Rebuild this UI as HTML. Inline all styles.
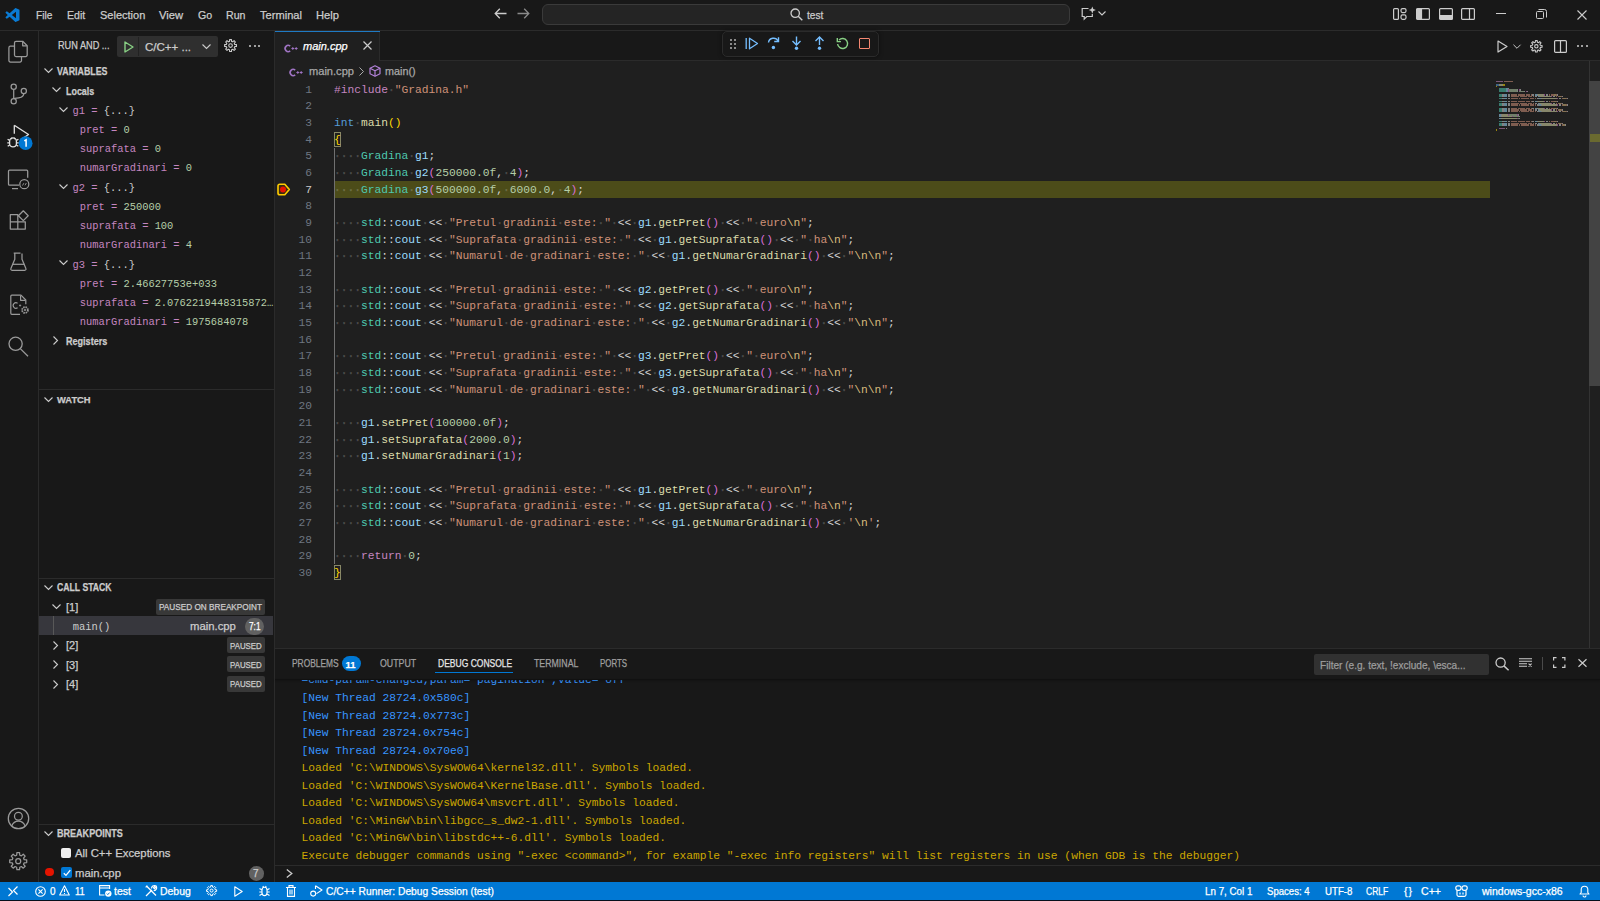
<!DOCTYPE html>
<html><head><meta charset="utf-8">
<style>
*{margin:0;padding:0;box-sizing:border-box}
html,body{-webkit-font-smoothing:antialiased;width:1600px;height:901px;overflow:hidden;background:#181818;font-family:"Liberation Sans",sans-serif;color:#cccccc}
.a{position:absolute}
body div{-webkit-text-stroke:0.25px currentColor}
.ln,.cl,.mo{-webkit-text-stroke:0}
svg{position:absolute;overflow:visible}
#title{left:0;top:0;width:1600px;height:31px;background:#181818;border-bottom:1px solid #2b2b2b}
#act{left:0;top:31px;width:39px;height:851px;background:#181818;border-right:1px solid #2b2b2b}
#side{left:39px;top:31px;width:236px;height:851px;background:#181818;border-right:1px solid #2b2b2b}
#editor{left:275px;top:31px;width:1325px;height:617px;background:#1f1f1f}
#tabs{left:275px;top:31px;width:1325px;height:30px;background:#181818;border-bottom:1px solid #2b2b2b}
#panel{left:275px;top:648px;width:1325px;height:234px;background:#181818;border-top:1px solid #2b2b2b}
#status{left:0;top:882px;width:1600px;height:19px;background:#0078d4;border-bottom:1.2px solid #06101c}
.mono{font-family:"Liberation Mono",monospace}
.menu{top:0;height:30px;line-height:30px;font-size:11.4px;color:#cccccc}
.ln{position:absolute;left:280px;width:32px;text-align:right;font-family:"Liberation Mono",monospace;font-size:11.25px;line-height:16.67px;height:16.67px;color:#6e7681;padding-top:0.5px}
.ln.act{color:#cccccc}
.cl{position:absolute;left:334px;font-family:"Liberation Mono",monospace;font-size:11.25px;line-height:16.67px;height:16.67px;white-space:pre;color:#d4d4d4;padding-top:0.5px}
.w{color:rgba(227,228,226,0.16);-webkit-text-stroke:0.6px rgba(227,228,226,0.16)}
</style></head><body>
<div id="title" class="a"></div>
<!-- logo -->
<svg style="left:5px;top:8px" width="15" height="14" viewBox="0 0 100 100"><path fill="#0a7bd4" d="M96.5 10.8 75.9.9a6.2 6.2 0 0 0-7.1 1.2L29.4 38 12.2 25a4.2 4.2 0 0 0-5.3.2L1.4 30.2a4.2 4.2 0 0 0 0 6.2L16.3 50 1.4 63.6a4.2 4.2 0 0 0 0 6.2l5.5 5a4.2 4.2 0 0 0 5.3.2l17.2-13 39.4 35.9a6.2 6.2 0 0 0 7.1 1.2l20.6-9.9a6.2 6.2 0 0 0 3.5-5.6V16.4a6.2 6.2 0 0 0-3.5-5.6ZM75 72.7 45.1 50 75 27.3Z"/></svg>
<!-- nav arrows -->
<svg style="left:494px;top:8px" width="13" height="11" viewBox="0 0 13 11"><path d="M12.5 5.5H1.2M5.8 0.8 1.2 5.5l4.6 4.7" fill="none" stroke="#cccccc" stroke-width="1.3"/></svg>
<svg style="left:517px;top:8px" width="13" height="11" viewBox="0 0 13 11"><path d="M0.5 5.5h11.3M7.2 0.8l4.6 4.7-4.6 4.7" fill="none" stroke="#8a8a8a" stroke-width="1.3"/></svg>
<!-- command center -->
<div class="a" style="left:542px;top:4px;width:528px;height:21px;background:#242424;border:1px solid #3a3a3a;border-radius:6px"></div>
<svg style="left:790px;top:8px" width="13" height="13" viewBox="0 0 13 13"><circle cx="5.2" cy="5.2" r="4.2" fill="none" stroke="#cccccc" stroke-width="1.3"/><path d="M8.2 8.2 12.3 12.3" stroke="#cccccc" stroke-width="1.4"/></svg>
<div class="a" style="left:35.70px;top:9.65px;font-size:11.40px;line-height:1;white-space:pre;color:#cccccc;font-family:'Liberation Sans',sans-serif;transform:scaleX(0.8935);transform-origin:0 0;">File</div>
<div class="a" style="left:66.70px;top:9.65px;font-size:11.40px;line-height:1;white-space:pre;color:#cccccc;font-family:'Liberation Sans',sans-serif;transform:scaleX(0.9255);transform-origin:0 0;">Edit</div>
<div class="a" style="left:99.60px;top:9.65px;font-size:11.40px;line-height:1;white-space:pre;color:#cccccc;font-family:'Liberation Sans',sans-serif;transform:scaleX(0.9657);transform-origin:0 0;">Selection</div>
<div class="a" style="left:159.30px;top:9.65px;font-size:11.40px;line-height:1;white-space:pre;color:#cccccc;font-family:'Liberation Sans',sans-serif;transform:scaleX(0.9833);transform-origin:0 0;">View</div>
<div class="a" style="left:197.60px;top:9.65px;font-size:11.40px;line-height:1;white-space:pre;color:#cccccc;font-family:'Liberation Sans',sans-serif;transform:scaleX(0.9330);transform-origin:0 0;">Go</div>
<div class="a" style="left:226.00px;top:9.65px;font-size:11.40px;line-height:1;white-space:pre;color:#cccccc;font-family:'Liberation Sans',sans-serif;transform:scaleX(0.9322);transform-origin:0 0;">Run</div>
<div class="a" style="left:260.00px;top:9.65px;font-size:11.40px;line-height:1;white-space:pre;color:#cccccc;font-family:'Liberation Sans',sans-serif;transform:scaleX(0.9747);transform-origin:0 0;">Terminal</div>
<div class="a" style="left:316.20px;top:9.65px;font-size:11.40px;line-height:1;white-space:pre;color:#cccccc;font-family:'Liberation Sans',sans-serif;transform:scaleX(0.9818);transform-origin:0 0;">Help</div>
<div class="a" style="left:807.00px;top:9.85px;font-size:11.40px;line-height:1;white-space:pre;color:#cccccc;font-family:'Liberation Sans',sans-serif;transform:scaleX(0.8854);transform-origin:0 0;">test</div>
<!-- copilot chat -->
<svg style="left:1081px;top:6px" width="16" height="14" viewBox="0 0 16 14"><path d="M7.5 2.5H1.2v8h2v2.6l2.6-2.6h5.5V8" fill="none" stroke="#cccccc" stroke-width="1.2"/><path d="M11.3 0.5l1 2.6 2.6 1-2.6 1-1 2.6-1-2.6-2.6-1 2.6-1z" fill="#cccccc"/></svg>
<svg style="left:1098px;top:11px" width="8" height="5" viewBox="0 0 8 5"><path d="M0.5 0.5 4 4 7.5 0.5" fill="none" stroke="#cccccc" stroke-width="1.1"/></svg>
<!-- layout icons -->
<svg style="left:1393px;top:8px" width="14" height="12" viewBox="0 0 14 12"><rect x="0.6" y="0.6" width="4.8" height="10.8" rx="1" fill="none" stroke="#cccccc" stroke-width="1.2"/><rect x="8" y="0.6" width="5" height="4" rx="1.5" fill="none" stroke="#cccccc" stroke-width="1.2"/><rect x="8" y="6.9" width="5" height="4.4" rx="1.5" fill="none" stroke="#cccccc" stroke-width="1.2"/></svg>
<svg style="left:1415.5px;top:8px" width="14" height="12" viewBox="0 0 14 12"><rect x="0.6" y="0.6" width="12.8" height="10.8" rx="1" fill="none" stroke="#cccccc" stroke-width="1.2"/><rect x="0.6" y="0.6" width="5.5" height="10.8" fill="#cccccc"/></svg>
<svg style="left:1438.5px;top:8px" width="14" height="12" viewBox="0 0 14 12"><rect x="0.6" y="0.6" width="12.8" height="10.8" rx="1" fill="none" stroke="#cccccc" stroke-width="1.2"/><rect x="0.6" y="7" width="12.8" height="4.4" fill="#cccccc"/></svg>
<svg style="left:1461px;top:8px" width="14" height="12" viewBox="0 0 14 12"><rect x="0.6" y="0.6" width="12.8" height="10.8" rx="1" fill="none" stroke="#cccccc" stroke-width="1.2"/><path d="M8.5 0.6v10.8" stroke="#cccccc" stroke-width="1.2"/></svg>
<!-- window controls -->
<div class="a" style="left:1496px;top:13px;width:10px;height:1px;background:#cccccc"></div>
<svg style="left:1536px;top:9px" width="11" height="10" viewBox="0 0 11 10"><rect x="0.5" y="2.5" width="7" height="7" rx="1" fill="none" stroke="#cccccc" stroke-width="1"/><path d="M2.5 0.5h6a2 2 0 0 1 2 2v6" fill="none" stroke="#cccccc" stroke-width="1"/></svg>
<svg style="left:1577px;top:10px" width="10" height="10" viewBox="0 0 10 10"><path d="M0.5 0.5l9 9M9.5 0.5l-9 9" stroke="#cccccc" stroke-width="1.1"/></svg>
<div id="act" class="a"></div>
<!-- explorer -->
<svg style="left:0;top:0" width="40" height="400" viewBox="0 0 40 400">
<g fill="none" stroke="#9a9a9a" stroke-width="1.25" stroke-linejoin="round">
 <path d="M14.6 46.2H10.4a1.5 1.5 0 0 0-1.5 1.5v12.8a1.5 1.5 0 0 0 1.5 1.5h9.6a1.5 1.5 0 0 0 1.5-1.5v-3.8"/>
 <path d="M16 41.3h6.7l4.5 4.5v9.2a1.5 1.5 0 0 1-1.5 1.5H16a1.5 1.5 0 0 1-1.5-1.5V42.8a1.5 1.5 0 0 1 1.5-1.5z"/>
 <path d="M22.7 41.5v4.3h4.3"/>
</g>
<!-- scm -->
<g fill="none" stroke="#9a9a9a" stroke-width="1.25">
 <circle cx="13.7" cy="86.8" r="2.6"/>
 <circle cx="13.7" cy="101.2" r="2.6"/>
 <circle cx="23.8" cy="91" r="2.6"/>
 <path d="M13.7 89.4v9.2"/>
 <path d="M23.8 93.6c0 4-4.5 4.3-10.1 5"/>
</g>
<!-- run and debug (active) -->
<g fill="none" stroke="#e0e0e0" stroke-width="1.3" stroke-linejoin="round">
 <path d="M14.3 125.2v8.5M14.3 125.2 28.5 134.5 20.5 140"/>
 <path d="M9.6 141.5a3.4 3.6 0 0 1 6.8 0v2.3a3.4 3 0 0 1-6.8 0z"/>
 <path d="M7.6 139.2l2 1.2M18.4 139.2l-2 1.2M7.3 142.8h2.3M16.4 142.8h2.3M7.7 146.3l2-1.3M18.3 146.3l-2-1.3M11 137.9l1 1.3M15 137.9l-1 1.3"/>
</g>
<circle cx="25.6" cy="143.2" r="6.9" fill="#0078d4"/>
<path d="M24.3 140.9l1.8-1.1v7" fill="none" stroke="#ffffff" stroke-width="1.5"/>
<!-- remote explorer -->
<g fill="none" stroke="#9a9a9a" stroke-width="1.25">
 <path d="M19 185.2H9.5a1 1 0 0 1-1-1v-13a1 1 0 0 1 1-1h17.2a1 1 0 0 1 1 1v6.5"/>
 <path d="M12 188.6h6"/>
 <circle cx="24.3" cy="184.2" r="4.5"/>
 <path d="M22.5 185.5l1.3-2.3M25 185.3l1.3-2.3" stroke-width="0.9"/>
</g>
<!-- extensions -->
<g fill="none" stroke="#9a9a9a" stroke-width="1.25" stroke-linejoin="round">
 <path d="M10.3 214.5h7.5v7.3h-7.5zM10.3 221.8h7.5v7.3h-7.5zM17.8 221.8h7.5v7.3h-7.5z"/>
 <path d="M23.3 210.8l4.9 4.9-4.9 4.9-4.9-4.9z"/>
</g>
<!-- testing -->
<g fill="none" stroke="#9a9a9a" stroke-width="1.25" stroke-linejoin="round">
 <path d="M13.7 253.2h6.8M14.8 253.5v5.8L10.9 268.6a1.2 1.2 0 0 0 1.1 1.7h12.8a1.2 1.2 0 0 0 1.1-1.7l-3.9-9.3v-5.8"/>
 <path d="M12.5 264.3h12"/>
</g>
<!-- c++ file gear -->
<g fill="none" stroke="#9a9a9a" stroke-width="1.2" stroke-linejoin="round">
 <path d="M20 314.3H11.8a1 1 0 0 1-1-1V296.2a1 1 0 0 1 1-1h9.2l4.8 4.8v4.2"/>
 <path d="M20.6 295.5v4.8h4.8"/>
 <path d="M17.6 303.2a2.8 2.8 0 1 0 0 4.6" stroke-width="1.1"/>
 <path d="M19 305.5h2.2M20.1 304.4v2.2" stroke-width="0.8"/>
</g>
<g transform="translate(25,310)"><circle r="2.9" fill="none" stroke="#9a9a9a" stroke-width="1.8" stroke-dasharray="1.5 0.8"/><circle r="1" fill="#9a9a9a"/></g>
<!-- search -->
<g fill="none" stroke="#9a9a9a" stroke-width="1.3">
 <circle cx="15.6" cy="343.8" r="6.6"/>
 <path d="M20.3 348.6 28 356.3"/>
</g>
</svg>
<svg style="left:0;top:790px" width="40" height="90" viewBox="0 790 40 90">
<g fill="none" stroke="#9a9a9a" stroke-width="1.25">
 <circle cx="18.5" cy="818.5" r="10.2"/>
 <circle cx="18.4" cy="816.2" r="3.9"/>
 <path d="M11.6 826.2c1.4-3.4 3.9-5 6.8-5s5.4 1.6 6.8 5"/>
</g>

</svg>
<div id="side" class="a"></div>
<div class="a" style="left:57.50px;top:40.57px;font-size:10.20px;line-height:1;white-space:pre;color:#cccccc;font-family:'Liberation Sans',sans-serif;transform:scaleX(0.9000);transform-origin:0 0;">RUN AND ...</div>
<div class="a" style="left:117px;top:36px;width:101px;height:21px;background:#2f2f2f;border-radius:2px"></div>
<div class="a" style="left:137.5px;top:37px;width:1px;height:19px;background:#222222"></div>
<svg style="left:124px;top:41px" width="10" height="12" viewBox="0 0 10 12"><path d="M1 1 9 6 1 11z" fill="none" stroke="#89d185" stroke-width="1.4" stroke-linejoin="round"/></svg>
<div class="a" style="left:145.00px;top:41.69px;font-size:11.00px;line-height:1;white-space:pre;color:#cccccc;font-family:'Liberation Sans',sans-serif;transform:scaleX(1.0455);transform-origin:0 0;">C/C++ ...</div>
<svg style="left:202.0px;top:43.5px" width="9" height="5" viewBox="0 0 9 5"><path d="M0.5 0.5 4.5 4.5 8.5 0.5" fill="none" stroke="#cccccc" stroke-width="1.1"/></svg>
<svg style="left:222.95px;top:38.05px" width="15.1" height="15.1" viewBox="-7.55 -7.55 15.1 15.1"><g fill="none" stroke="#cccccc" stroke-width="1.10" stroke-linejoin="round"><path d="M-1.07 -4.18 L-0.94 -5.93 L0.94 -5.93 L1.07 -4.18 L2.20 -3.72 L3.53 -4.85 L4.85 -3.53 L3.72 -2.20 L4.18 -1.07 L5.93 -0.94 L5.93 0.94 L4.18 1.07 L3.72 2.20 L4.85 3.53 L3.53 4.85 L2.20 3.72 L1.07 4.18 L0.94 5.93 L-0.94 5.93 L-1.07 4.18 L-2.20 3.72 L-3.53 4.85 L-4.85 3.53 L-3.72 2.20 L-4.18 1.07 L-5.93 0.94 L-5.93 -0.94 L-4.18 -1.07 L-3.72 -2.20 L-4.85 -3.53 L-3.53 -4.85 L-2.20 -3.72Z"/><circle r="1.80"/></g></svg>
<div class="a" style="left:249.0px;top:44.5px;width:2px;height:2px;background:#cccccc;border-radius:1px"></div>
<div class="a" style="left:253.5px;top:44.5px;width:2px;height:2px;background:#cccccc;border-radius:1px"></div>
<div class="a" style="left:258.0px;top:44.5px;width:2px;height:2px;background:#cccccc;border-radius:1px"></div>
<svg style="left:44.0px;top:68.3px" width="9" height="5" viewBox="0 0 9 5"><path d="M0.5 0.5 4.5 4.5 8.5 0.5" fill="none" stroke="#cccccc" stroke-width="1.1"/></svg>
<div class="a" style="left:57.10px;top:67.47px;font-size:10.20px;line-height:1;white-space:pre;color:#cccccc;font-family:'Liberation Sans',sans-serif;font-weight:bold;transform:scaleX(0.8696);transform-origin:0 0;">VARIABLES</div>
<svg style="left:51.5px;top:87.4px" width="9" height="5" viewBox="0 0 9 5"><path d="M0.5 0.5 4.5 4.5 8.5 0.5" fill="none" stroke="#cccccc" stroke-width="1.1"/></svg>
<div class="a" style="left:65.50px;top:85.53px;font-size:10.60px;line-height:1;white-space:pre;color:#cccccc;font-family:'Liberation Sans',sans-serif;font-weight:bold;transform:scaleX(0.8422);transform-origin:0 0;">Locals</div>
<svg style="left:58.5px;top:106.6px" width="9" height="5" viewBox="0 0 9 5"><path d="M0.5 0.5 4.5 4.5 8.5 0.5" fill="none" stroke="#cccccc" stroke-width="1.1"/></svg>
<div class="a mo" style="left:72.60px;top:105.74px;font-size:10.42px;line-height:1;white-space:pre;color:#cccccc;font-family:'Liberation Mono',monospace;"><span style="color:#c586c0">g1 = </span><span style="color:#cccccc">{...}</span></div>
<div class="a mo" style="left:79.70px;top:124.96px;font-size:10.42px;line-height:1;white-space:pre;color:#cccccc;font-family:'Liberation Mono',monospace;"><span style="color:#c586c0">pret = </span><span style="color:#b5cea8">0</span></div>
<div class="a mo" style="left:79.70px;top:144.18px;font-size:10.42px;line-height:1;white-space:pre;color:#cccccc;font-family:'Liberation Mono',monospace;"><span style="color:#c586c0">suprafata = </span><span style="color:#b5cea8">0</span></div>
<div class="a mo" style="left:79.70px;top:163.40px;font-size:10.42px;line-height:1;white-space:pre;color:#cccccc;font-family:'Liberation Mono',monospace;"><span style="color:#c586c0">numarGradinari = </span><span style="color:#b5cea8">0</span></div>
<svg style="left:58.5px;top:183.5px" width="9" height="5" viewBox="0 0 9 5"><path d="M0.5 0.5 4.5 4.5 8.5 0.5" fill="none" stroke="#cccccc" stroke-width="1.1"/></svg>
<div class="a mo" style="left:72.60px;top:182.62px;font-size:10.42px;line-height:1;white-space:pre;color:#cccccc;font-family:'Liberation Mono',monospace;"><span style="color:#c586c0">g2 = </span><span style="color:#cccccc">{...}</span></div>
<div class="a mo" style="left:79.70px;top:201.84px;font-size:10.42px;line-height:1;white-space:pre;color:#cccccc;font-family:'Liberation Mono',monospace;"><span style="color:#c586c0">pret = </span><span style="color:#b5cea8">250000</span></div>
<div class="a mo" style="left:79.70px;top:221.06px;font-size:10.42px;line-height:1;white-space:pre;color:#cccccc;font-family:'Liberation Mono',monospace;"><span style="color:#c586c0">suprafata = </span><span style="color:#b5cea8">100</span></div>
<div class="a mo" style="left:79.70px;top:240.28px;font-size:10.42px;line-height:1;white-space:pre;color:#cccccc;font-family:'Liberation Mono',monospace;"><span style="color:#c586c0">numarGradinari = </span><span style="color:#b5cea8">4</span></div>
<svg style="left:58.5px;top:260.4px" width="9" height="5" viewBox="0 0 9 5"><path d="M0.5 0.5 4.5 4.5 8.5 0.5" fill="none" stroke="#cccccc" stroke-width="1.1"/></svg>
<div class="a mo" style="left:72.60px;top:259.50px;font-size:10.42px;line-height:1;white-space:pre;color:#cccccc;font-family:'Liberation Mono',monospace;"><span style="color:#c586c0">g3 = </span><span style="color:#cccccc">{...}</span></div>
<div class="a mo" style="left:79.70px;top:278.72px;font-size:10.42px;line-height:1;white-space:pre;color:#cccccc;font-family:'Liberation Mono',monospace;"><span style="color:#c586c0">pret = </span><span style="color:#b5cea8">2.46627753e+033</span></div>
<div class="a mo" style="left:79.70px;top:297.94px;font-size:10.42px;line-height:1;white-space:pre;color:#cccccc;font-family:'Liberation Mono',monospace;"><span style="color:#c586c0">suprafata = </span><span style="color:#b5cea8">2.0762219448315872…</span></div>
<div class="a mo" style="left:79.70px;top:317.16px;font-size:10.42px;line-height:1;white-space:pre;color:#cccccc;font-family:'Liberation Mono',monospace;"><span style="color:#c586c0">numarGradinari = </span><span style="color:#b5cea8">1975684078</span></div>
<svg style="left:52.5px;top:336.3px" width="5" height="9" viewBox="0 0 5 9"><path d="M0.5 0.5 4.5 4.5 0.5 8.5" fill="none" stroke="#cccccc" stroke-width="1.1"/></svg>
<div class="a" style="left:65.80px;top:336.19px;font-size:10.60px;line-height:1;white-space:pre;color:#cccccc;font-family:'Liberation Sans',sans-serif;font-weight:bold;transform:scaleX(0.8544);transform-origin:0 0;">Registers</div>
<div class="a" style="left:39px;top:389px;width:235px;height:1px;background:#2b2b2b"></div>
<svg style="left:44.0px;top:396.8px" width="9" height="5" viewBox="0 0 9 5"><path d="M0.5 0.5 4.5 4.5 8.5 0.5" fill="none" stroke="#cccccc" stroke-width="1.1"/></svg>
<div class="a" style="left:57.40px;top:395.22px;font-size:9.90px;line-height:1;white-space:pre;color:#cccccc;font-family:'Liberation Sans',sans-serif;font-weight:bold;transform:scaleX(0.9482);transform-origin:0 0;">WATCH</div>
<div class="a" style="left:39px;top:578px;width:235px;height:1px;background:#2b2b2b"></div>
<svg style="left:44.0px;top:585.0px" width="9" height="5" viewBox="0 0 9 5"><path d="M0.5 0.5 4.5 4.5 8.5 0.5" fill="none" stroke="#cccccc" stroke-width="1.1"/></svg>
<div class="a" style="left:57.30px;top:582.87px;font-size:10.20px;line-height:1;white-space:pre;color:#cccccc;font-family:'Liberation Sans',sans-serif;font-weight:bold;transform:scaleX(0.8519);transform-origin:0 0;">CALL STACK</div>
<svg style="left:51.6px;top:603.5px" width="9" height="5" viewBox="0 0 9 5"><path d="M0.5 0.5 4.5 4.5 8.5 0.5" fill="none" stroke="#cccccc" stroke-width="1.1"/></svg>
<div class="a" style="left:66.10px;top:602.23px;font-size:10.60px;line-height:1;white-space:pre;color:#cccccc;font-family:'Liberation Sans',sans-serif;transform:scaleX(1.0369);transform-origin:0 0;">[1]</div>
<div class="a" style="left:156px;top:599px;width:109px;height:16px;background:#383838;border-radius:2px"></div>
<div class="a" style="left:158.70px;top:603.32px;font-size:8.60px;line-height:1;white-space:pre;color:#cccccc;font-family:'Liberation Sans',sans-serif;transform:scaleX(0.9551);transform-origin:0 0;">PAUSED ON BREAKPOINT</div>
<div class="a" style="left:39px;top:616px;width:234px;height:19.2px;background:#37373d"></div>
<div class="a" style="left:53px;top:616px;width:1px;height:19.2px;background:#585858"></div>
<div class="a mo" style="left:72.80px;top:622.12px;font-size:10.42px;line-height:1;white-space:pre;color:#cccccc;font-family:'Liberation Mono',monospace;">main()</div>
<div class="a" style="left:189.90px;top:621.03px;font-size:10.60px;line-height:1;white-space:pre;color:#cccccc;font-family:'Liberation Sans',sans-serif;transform:scaleX(1.0665);transform-origin:0 0;">main.cpp</div>
<div class="a" style="left:244.7px;top:617.5px;width:19.5px;height:17.5px;background:#616161;border-radius:9px"></div>
<div class="a" style="left:248.70px;top:621.53px;font-size:10.00px;line-height:1;white-space:pre;color:#ffffff;font-family:'Liberation Sans',sans-serif;transform:scaleX(0.8273);transform-origin:0 0;">7:1</div>
<svg style="left:52.5px;top:640.9px" width="5" height="9" viewBox="0 0 5 9"><path d="M0.5 0.5 4.5 4.5 0.5 8.5" fill="none" stroke="#cccccc" stroke-width="1.1"/></svg>
<div class="a" style="left:66.10px;top:640.23px;font-size:10.60px;line-height:1;white-space:pre;color:#cccccc;font-family:'Liberation Sans',sans-serif;transform:scaleX(1.0369);transform-origin:0 0;">[2]</div>
<div class="a" style="left:227.2px;top:637.1px;width:37.5px;height:16px;background:#383838;border-radius:2px"></div>
<div class="a" style="left:229.90px;top:641.62px;font-size:8.60px;line-height:1;white-space:pre;color:#cccccc;font-family:'Liberation Sans',sans-serif;transform:scaleX(0.9153);transform-origin:0 0;">PAUSED</div>
<svg style="left:52.5px;top:660.2px" width="5" height="9" viewBox="0 0 5 9"><path d="M0.5 0.5 4.5 4.5 0.5 8.5" fill="none" stroke="#cccccc" stroke-width="1.1"/></svg>
<div class="a" style="left:66.10px;top:659.53px;font-size:10.60px;line-height:1;white-space:pre;color:#cccccc;font-family:'Liberation Sans',sans-serif;transform:scaleX(1.0369);transform-origin:0 0;">[3]</div>
<div class="a" style="left:227.2px;top:656.4px;width:37.5px;height:16px;background:#383838;border-radius:2px"></div>
<div class="a" style="left:229.90px;top:660.92px;font-size:8.60px;line-height:1;white-space:pre;color:#cccccc;font-family:'Liberation Sans',sans-serif;transform:scaleX(0.9153);transform-origin:0 0;">PAUSED</div>
<svg style="left:52.5px;top:679.5px" width="5" height="9" viewBox="0 0 5 9"><path d="M0.5 0.5 4.5 4.5 0.5 8.5" fill="none" stroke="#cccccc" stroke-width="1.1"/></svg>
<div class="a" style="left:66.10px;top:678.83px;font-size:10.60px;line-height:1;white-space:pre;color:#cccccc;font-family:'Liberation Sans',sans-serif;transform:scaleX(1.0369);transform-origin:0 0;">[4]</div>
<div class="a" style="left:227.2px;top:675.9px;width:37.5px;height:16px;background:#383838;border-radius:2px"></div>
<div class="a" style="left:229.90px;top:680.22px;font-size:8.60px;line-height:1;white-space:pre;color:#cccccc;font-family:'Liberation Sans',sans-serif;transform:scaleX(0.9153);transform-origin:0 0;">PAUSED</div>
<div class="a" style="left:39px;top:824px;width:235px;height:1px;background:#2b2b2b"></div>
<svg style="left:44.0px;top:831.0px" width="9" height="5" viewBox="0 0 9 5"><path d="M0.5 0.5 4.5 4.5 8.5 0.5" fill="none" stroke="#cccccc" stroke-width="1.1"/></svg>
<div class="a" style="left:57.30px;top:829.07px;font-size:10.20px;line-height:1;white-space:pre;color:#cccccc;font-family:'Liberation Sans',sans-serif;font-weight:bold;transform:scaleX(0.8875);transform-origin:0 0;">BREAKPOINTS</div>
<div class="a" style="left:61.3px;top:848.3px;width:10px;height:10px;background:#f0f0f0;border-radius:2px"></div>
<div class="a" style="left:75.00px;top:847.83px;font-size:10.60px;line-height:1;white-space:pre;color:#cccccc;font-family:'Liberation Sans',sans-serif;transform:scaleX(1.0673);transform-origin:0 0;">All C++ Exceptions</div>
<div class="a" style="left:45.4px;top:867.6px;width:8.6px;height:8.6px;background:#e51400;border-radius:50%"></div>
<div class="a" style="left:61.3px;top:867px;width:10.5px;height:11px;background:#0078d4;border-radius:2px"></div>
<svg style="left:62.5px;top:868.5px" width="8" height="8" viewBox="0 0 8 8"><path d="M0.8 4.2 3 6.4 7.3 1.2" fill="none" stroke="#ffffff" stroke-width="1.3"/></svg>
<div class="a" style="left:75.00px;top:868.03px;font-size:10.60px;line-height:1;white-space:pre;color:#cccccc;font-family:'Liberation Sans',sans-serif;transform:scaleX(1.0689);transform-origin:0 0;">main.cpp</div>
<div class="a" style="left:248.7px;top:866px;width:15.3px;height:15px;background:#616161;border-radius:50%"></div>
<div class="a" style="left:253.00px;top:869.03px;font-size:10.00px;line-height:1;white-space:pre;color:#cccccc;font-family:'Liberation Sans',sans-serif;">7</div>
<div id="editor" class="a"></div>
<div id="tabs" class="a"></div>
<div class="a" style="left:275px;top:31px;width:105px;height:30px;background:#1f1f1f;border-right:1px solid #2b2b2b"></div>
<div class="a" style="left:275px;top:31px;width:105px;height:1px;background:#1f7ac4"></div>
<svg style="left:284.0px;top:43.5px" width="14" height="9" viewBox="0 0 14 9"><g fill="none" stroke="#a074c4" stroke-width="1.6"><path d="M6.2 2.1A3.1 3.1 0 1 0 6.2 6.9"/></g><g stroke="#a074c4" stroke-width="1"><path d="M7.4 4.5h2.8M8.8 3.1v2.8M10.8 4.5h2.8M12.2 3.1v2.8"/></g></svg>
<div class="a" style="left:302.75px;top:40.99px;font-size:11.00px;line-height:1;white-space:pre;color:#ffffff;font-family:'Liberation Sans',sans-serif;font-style:italic;transform:scaleX(1.0020);transform-origin:0 0;">main.cpp</div>
<svg style="left:362.5px;top:40.5px" width="9" height="9" viewBox="0 0 9 9"><path d="M0.5 0.5l8 8M8.5 0.5l-8 8" stroke="#cccccc" stroke-width="1.2"/></svg>
<svg style="left:289.2px;top:68.3px" width="14" height="9" viewBox="0 0 14 9"><g fill="none" stroke="#a074c4" stroke-width="1.6"><path d="M6.2 2.1A3.1 3.1 0 1 0 6.2 6.9"/></g><g stroke="#a074c4" stroke-width="1"><path d="M7.4 4.5h2.8M8.8 3.1v2.8M10.8 4.5h2.8M12.2 3.1v2.8"/></g></svg>
<div class="a" style="left:308.75px;top:66.36px;font-size:10.80px;line-height:1;white-space:pre;color:#a9a9a9;font-family:'Liberation Sans',sans-serif;transform:scaleX(1.0263);transform-origin:0 0;">main.cpp</div>
<svg style="left:358.5px;top:67px" width="5" height="9" viewBox="0 0 5 9"><path d="M0.5 0.5 4.5 4.5 0.5 8.5" fill="none" stroke="#a9a9a9" stroke-width="1"/></svg>
<svg style="left:369px;top:65px" width="12" height="12" viewBox="0 0 12 12"><g fill="none" stroke="#b180d7" stroke-width="1.2" stroke-linejoin="round"><path d="M6 0.8 11 3.3v5.4L6 11.2 1 8.7V3.3z"/><path d="M1 3.3 6 5.8 11 3.3M6 5.8v5.4"/></g></svg>
<div class="a" style="left:385.00px;top:66.36px;font-size:10.80px;line-height:1;white-space:pre;color:#a9a9a9;font-family:'Liberation Sans',sans-serif;">main()</div>
<div class="a" style="left:721.5px;top:31px;width:157px;height:26px;background:#181818;border:1px solid #2b2b2b;border-radius:5px;box-shadow:0 0 4px rgba(0,0,0,0.5)"></div>
<div class="a" style="left:729.5px;top:39.0px;width:2.2px;height:2.2px;background:#8a8a8a"></div>
<div class="a" style="left:729.5px;top:43.0px;width:2.2px;height:2.2px;background:#8a8a8a"></div>
<div class="a" style="left:729.5px;top:47.0px;width:2.2px;height:2.2px;background:#8a8a8a"></div>
<div class="a" style="left:733.5px;top:39.0px;width:2.2px;height:2.2px;background:#8a8a8a"></div>
<div class="a" style="left:733.5px;top:43.0px;width:2.2px;height:2.2px;background:#8a8a8a"></div>
<div class="a" style="left:733.5px;top:47.0px;width:2.2px;height:2.2px;background:#8a8a8a"></div>
<svg style="left:745px;top:36.5px" width="14" height="13" viewBox="0 0 14 13"><g fill="none" stroke="#75beff" stroke-width="1.3" stroke-linejoin="round"><path d="M1.2 1v11"/><path d="M4.5 1.2 12.5 6.5 4.5 11.8z"/></g></svg>
<svg style="left:767px;top:36px" width="13" height="14" viewBox="0 0 13 14"><g fill="none" stroke="#75beff" stroke-width="1.4"><path d="M1.5 6.5a5 4.8 0 0 1 9.5-1.5"/><path d="M11.5 1.2v4.3H7.2"/></g><circle cx="6.4" cy="11.5" r="1.7" fill="#75beff"/></svg>
<svg style="left:790px;top:35.5px" width="13" height="15" viewBox="0 0 13 15"><g fill="none" stroke="#75beff" stroke-width="1.4"><path d="M6.5 0.5v8"/><path d="M2.5 5 6.5 9 10.5 5"/></g><circle cx="6.5" cy="12.3" r="1.7" fill="#75beff"/></svg>
<svg style="left:813px;top:35.5px" width="13" height="15" viewBox="0 0 13 15"><g fill="none" stroke="#75beff" stroke-width="1.4"><path d="M6.5 1v8"/><path d="M2.5 5 6.5 1 10.5 5"/></g><circle cx="6.5" cy="12.3" r="1.7" fill="#75beff"/></svg>
<svg style="left:836px;top:36.5px" width="13" height="13" viewBox="0 0 13 13"><g fill="none" stroke="#89d185" stroke-width="1.4"><path d="M3 3a5 5 0 1 1-1.4 4"/><path d="M1.3 1v3.6h3.6"/></g></svg>
<div class="a" style="left:859px;top:37.5px;width:11px;height:11px;border:1.4px solid #f48771;border-radius:1px"></div>
<svg style="left:1497px;top:40px" width="11" height="13" viewBox="0 0 11 13"><path d="M1 1 10 6.5 1 12z" fill="none" stroke="#cccccc" stroke-width="1.2" stroke-linejoin="round"/></svg>
<svg style="left:1512.5px;top:44.0px" width="8" height="5" viewBox="0 0 9 5"><path d="M0.5 0.5 4.5 4.5 8.5 0.5" fill="none" stroke="#cccccc" stroke-width="1.1"/></svg>
<svg style="left:1529.15px;top:38.85px" width="14.7" height="14.7" viewBox="-7.35 -7.35 14.7 14.7"><g fill="none" stroke="#cccccc" stroke-width="1.10" stroke-linejoin="round"><path d="M-1.04 -4.04 L-0.91 -5.73 L0.91 -5.73 L1.04 -4.04 L2.13 -3.59 L3.41 -4.69 L4.69 -3.41 L3.59 -2.13 L4.04 -1.04 L5.73 -0.91 L5.73 0.91 L4.04 1.04 L3.59 2.13 L4.69 3.41 L3.41 4.69 L2.13 3.59 L1.04 4.04 L0.91 5.73 L-0.91 5.73 L-1.04 4.04 L-2.13 3.59 L-3.41 4.69 L-4.69 3.41 L-3.59 2.13 L-4.04 1.04 L-5.73 0.91 L-5.73 -0.91 L-4.04 -1.04 L-3.59 -2.13 L-4.69 -3.41 L-3.41 -4.69 L-2.13 -3.59Z"/><circle r="1.70"/></g></svg>
<svg style="left:1554px;top:40px" width="13" height="13" viewBox="0 0 13 13"><g fill="none" stroke="#cccccc" stroke-width="1.2"><rect x="0.6" y="0.6" width="11.8" height="11.8" rx="1"/><path d="M6.5 0.6v11.8"/></g></svg>
<div class="a" style="left:1576.5px;top:45px;width:2px;height:2px;background:#cccccc;border-radius:1px"></div>
<div class="a" style="left:1581.0px;top:45px;width:2px;height:2px;background:#cccccc;border-radius:1px"></div>
<div class="a" style="left:1585.5px;top:45px;width:2px;height:2px;background:#cccccc;border-radius:1px"></div>
<div class="a" style="left:334px;top:131.5px;width:7px;height:15.5px;border:1px solid #888866"></div>
<div class="a" style="left:334px;top:564.5px;width:7px;height:15.5px;border:1px solid #888866"></div>
<svg style="left:277px;top:182.5px" width="14" height="13" viewBox="0 0 14 13"><path d="M2.8 1.2h5l4.5 5.3-4.5 5.3h-5A1.8 1.8 0 0 1 1 10V3a1.8 1.8 0 0 1 1.8-1.8z" fill="#3a2a10" stroke="#ffcc00" stroke-width="1.6" stroke-linejoin="round"/><circle cx="6" cy="6.5" r="3" fill="#e51400"/></svg>
<div class="a" style="left:0;top:0;opacity:0.55"><div class="a" style="left:1496.00px;top:81.00px;width:6.94px;height:1.45px;background:#c586c0"></div>
<div class="a" style="left:1503.81px;top:81.00px;width:9.55px;height:1.45px;background:#ce9178"></div>
<div class="a" style="left:1496.00px;top:84.33px;width:2.60px;height:1.45px;background:#569cd6"></div>
<div class="a" style="left:1499.47px;top:84.33px;width:3.47px;height:1.45px;background:#dcdcaa"></div>
<div class="a" style="left:1502.94px;top:84.33px;width:1.74px;height:1.45px;background:#ffd700"></div>
<div class="a" style="left:1496.00px;top:86.00px;width:0.87px;height:1.45px;background:#ffd700"></div>
<div class="a" style="left:1499.47px;top:87.67px;width:6.08px;height:1.45px;background:#4ec9b0"></div>
<div class="a" style="left:1506.42px;top:87.67px;width:1.74px;height:1.45px;background:#9cdcfe"></div>
<div class="a" style="left:1508.15px;top:87.67px;width:0.87px;height:1.45px;background:#d4d4d4"></div>
<div class="a" style="left:1499.47px;top:89.34px;width:6.08px;height:1.45px;background:#4ec9b0"></div>
<div class="a" style="left:1506.42px;top:89.34px;width:1.74px;height:1.45px;background:#9cdcfe"></div>
<div class="a" style="left:1508.15px;top:89.34px;width:0.87px;height:1.45px;background:#da70d6"></div>
<div class="a" style="left:1509.02px;top:89.34px;width:7.81px;height:1.45px;background:#b5cea8"></div>
<div class="a" style="left:1516.83px;top:89.34px;width:0.87px;height:1.45px;background:#d4d4d4"></div>
<div class="a" style="left:1518.57px;top:89.34px;width:0.87px;height:1.45px;background:#b5cea8"></div>
<div class="a" style="left:1519.44px;top:89.34px;width:0.87px;height:1.45px;background:#da70d6"></div>
<div class="a" style="left:1520.30px;top:89.34px;width:0.87px;height:1.45px;background:#d4d4d4"></div>
<div class="a" style="left:1499.47px;top:91.00px;width:6.08px;height:1.45px;background:#4ec9b0"></div>
<div class="a" style="left:1506.42px;top:91.00px;width:1.74px;height:1.45px;background:#9cdcfe"></div>
<div class="a" style="left:1508.15px;top:91.00px;width:0.87px;height:1.45px;background:#da70d6"></div>
<div class="a" style="left:1509.02px;top:91.00px;width:7.81px;height:1.45px;background:#b5cea8"></div>
<div class="a" style="left:1516.83px;top:91.00px;width:0.87px;height:1.45px;background:#d4d4d4"></div>
<div class="a" style="left:1518.57px;top:91.00px;width:5.21px;height:1.45px;background:#b5cea8"></div>
<div class="a" style="left:1523.78px;top:91.00px;width:0.87px;height:1.45px;background:#d4d4d4"></div>
<div class="a" style="left:1525.51px;top:91.00px;width:0.87px;height:1.45px;background:#b5cea8"></div>
<div class="a" style="left:1526.38px;top:91.00px;width:0.87px;height:1.45px;background:#da70d6"></div>
<div class="a" style="left:1527.25px;top:91.00px;width:0.87px;height:1.45px;background:#d4d4d4"></div>
<div class="a" style="left:1499.47px;top:94.34px;width:2.60px;height:1.45px;background:#4ec9b0"></div>
<div class="a" style="left:1502.08px;top:94.34px;width:1.74px;height:1.45px;background:#d4d4d4"></div>
<div class="a" style="left:1503.81px;top:94.34px;width:3.47px;height:1.45px;background:#9cdcfe"></div>
<div class="a" style="left:1508.15px;top:94.34px;width:1.74px;height:1.45px;background:#d4d4d4"></div>
<div class="a" style="left:1510.76px;top:94.34px;width:6.08px;height:1.45px;background:#ce9178"></div>
<div class="a" style="left:1517.70px;top:94.34px;width:6.94px;height:1.45px;background:#ce9178"></div>
<div class="a" style="left:1525.51px;top:94.34px;width:4.34px;height:1.45px;background:#ce9178"></div>
<div class="a" style="left:1530.72px;top:94.34px;width:0.87px;height:1.45px;background:#ce9178"></div>
<div class="a" style="left:1532.46px;top:94.34px;width:1.74px;height:1.45px;background:#d4d4d4"></div>
<div class="a" style="left:1535.06px;top:94.34px;width:1.74px;height:1.45px;background:#9cdcfe"></div>
<div class="a" style="left:1536.80px;top:94.34px;width:0.87px;height:1.45px;background:#d4d4d4"></div>
<div class="a" style="left:1537.66px;top:94.34px;width:6.08px;height:1.45px;background:#dcdcaa"></div>
<div class="a" style="left:1543.74px;top:94.34px;width:1.74px;height:1.45px;background:#da70d6"></div>
<div class="a" style="left:1546.34px;top:94.34px;width:1.74px;height:1.45px;background:#d4d4d4"></div>
<div class="a" style="left:1548.95px;top:94.34px;width:0.87px;height:1.45px;background:#ce9178"></div>
<div class="a" style="left:1550.68px;top:94.34px;width:3.47px;height:1.45px;background:#ce9178"></div>
<div class="a" style="left:1554.16px;top:94.34px;width:1.74px;height:1.45px;background:#d7ba7d"></div>
<div class="a" style="left:1555.89px;top:94.34px;width:0.87px;height:1.45px;background:#ce9178"></div>
<div class="a" style="left:1556.76px;top:94.34px;width:0.87px;height:1.45px;background:#d4d4d4"></div>
<div class="a" style="left:1499.47px;top:96.00px;width:2.60px;height:1.45px;background:#4ec9b0"></div>
<div class="a" style="left:1502.08px;top:96.00px;width:1.74px;height:1.45px;background:#d4d4d4"></div>
<div class="a" style="left:1503.81px;top:96.00px;width:3.47px;height:1.45px;background:#9cdcfe"></div>
<div class="a" style="left:1508.15px;top:96.00px;width:1.74px;height:1.45px;background:#d4d4d4"></div>
<div class="a" style="left:1510.76px;top:96.00px;width:8.68px;height:1.45px;background:#ce9178"></div>
<div class="a" style="left:1520.30px;top:96.00px;width:6.94px;height:1.45px;background:#ce9178"></div>
<div class="a" style="left:1528.12px;top:96.00px;width:4.34px;height:1.45px;background:#ce9178"></div>
<div class="a" style="left:1533.32px;top:96.00px;width:0.87px;height:1.45px;background:#ce9178"></div>
<div class="a" style="left:1535.06px;top:96.00px;width:1.74px;height:1.45px;background:#d4d4d4"></div>
<div class="a" style="left:1537.66px;top:96.00px;width:1.74px;height:1.45px;background:#9cdcfe"></div>
<div class="a" style="left:1539.40px;top:96.00px;width:0.87px;height:1.45px;background:#d4d4d4"></div>
<div class="a" style="left:1540.27px;top:96.00px;width:10.42px;height:1.45px;background:#dcdcaa"></div>
<div class="a" style="left:1550.68px;top:96.00px;width:1.74px;height:1.45px;background:#da70d6"></div>
<div class="a" style="left:1553.29px;top:96.00px;width:1.74px;height:1.45px;background:#d4d4d4"></div>
<div class="a" style="left:1555.89px;top:96.00px;width:0.87px;height:1.45px;background:#ce9178"></div>
<div class="a" style="left:1557.63px;top:96.00px;width:1.74px;height:1.45px;background:#ce9178"></div>
<div class="a" style="left:1559.36px;top:96.00px;width:1.74px;height:1.45px;background:#d7ba7d"></div>
<div class="a" style="left:1561.10px;top:96.00px;width:0.87px;height:1.45px;background:#ce9178"></div>
<div class="a" style="left:1561.97px;top:96.00px;width:0.87px;height:1.45px;background:#d4d4d4"></div>
<div class="a" style="left:1499.47px;top:97.67px;width:2.60px;height:1.45px;background:#4ec9b0"></div>
<div class="a" style="left:1502.08px;top:97.67px;width:1.74px;height:1.45px;background:#d4d4d4"></div>
<div class="a" style="left:1503.81px;top:97.67px;width:3.47px;height:1.45px;background:#9cdcfe"></div>
<div class="a" style="left:1508.15px;top:97.67px;width:1.74px;height:1.45px;background:#d4d4d4"></div>
<div class="a" style="left:1510.76px;top:97.67px;width:6.94px;height:1.45px;background:#ce9178"></div>
<div class="a" style="left:1518.57px;top:97.67px;width:1.74px;height:1.45px;background:#ce9178"></div>
<div class="a" style="left:1521.17px;top:97.67px;width:7.81px;height:1.45px;background:#ce9178"></div>
<div class="a" style="left:1529.85px;top:97.67px;width:4.34px;height:1.45px;background:#ce9178"></div>
<div class="a" style="left:1535.06px;top:97.67px;width:0.87px;height:1.45px;background:#ce9178"></div>
<div class="a" style="left:1536.80px;top:97.67px;width:1.74px;height:1.45px;background:#d4d4d4"></div>
<div class="a" style="left:1539.40px;top:97.67px;width:1.74px;height:1.45px;background:#9cdcfe"></div>
<div class="a" style="left:1541.14px;top:97.67px;width:0.87px;height:1.45px;background:#d4d4d4"></div>
<div class="a" style="left:1542.00px;top:97.67px;width:14.76px;height:1.45px;background:#dcdcaa"></div>
<div class="a" style="left:1556.76px;top:97.67px;width:1.74px;height:1.45px;background:#da70d6"></div>
<div class="a" style="left:1559.36px;top:97.67px;width:1.74px;height:1.45px;background:#d4d4d4"></div>
<div class="a" style="left:1561.97px;top:97.67px;width:0.87px;height:1.45px;background:#ce9178"></div>
<div class="a" style="left:1562.84px;top:97.67px;width:3.47px;height:1.45px;background:#d7ba7d"></div>
<div class="a" style="left:1566.31px;top:97.67px;width:0.87px;height:1.45px;background:#ce9178"></div>
<div class="a" style="left:1567.18px;top:97.67px;width:0.87px;height:1.45px;background:#d4d4d4"></div>
<div class="a" style="left:1499.47px;top:101.00px;width:2.60px;height:1.45px;background:#4ec9b0"></div>
<div class="a" style="left:1502.08px;top:101.00px;width:1.74px;height:1.45px;background:#d4d4d4"></div>
<div class="a" style="left:1503.81px;top:101.00px;width:3.47px;height:1.45px;background:#9cdcfe"></div>
<div class="a" style="left:1508.15px;top:101.00px;width:1.74px;height:1.45px;background:#d4d4d4"></div>
<div class="a" style="left:1510.76px;top:101.00px;width:6.08px;height:1.45px;background:#ce9178"></div>
<div class="a" style="left:1517.70px;top:101.00px;width:6.94px;height:1.45px;background:#ce9178"></div>
<div class="a" style="left:1525.51px;top:101.00px;width:4.34px;height:1.45px;background:#ce9178"></div>
<div class="a" style="left:1530.72px;top:101.00px;width:0.87px;height:1.45px;background:#ce9178"></div>
<div class="a" style="left:1532.46px;top:101.00px;width:1.74px;height:1.45px;background:#d4d4d4"></div>
<div class="a" style="left:1535.06px;top:101.00px;width:1.74px;height:1.45px;background:#9cdcfe"></div>
<div class="a" style="left:1536.80px;top:101.00px;width:0.87px;height:1.45px;background:#d4d4d4"></div>
<div class="a" style="left:1537.66px;top:101.00px;width:6.08px;height:1.45px;background:#dcdcaa"></div>
<div class="a" style="left:1543.74px;top:101.00px;width:1.74px;height:1.45px;background:#da70d6"></div>
<div class="a" style="left:1546.34px;top:101.00px;width:1.74px;height:1.45px;background:#d4d4d4"></div>
<div class="a" style="left:1548.95px;top:101.00px;width:0.87px;height:1.45px;background:#ce9178"></div>
<div class="a" style="left:1550.68px;top:101.00px;width:3.47px;height:1.45px;background:#ce9178"></div>
<div class="a" style="left:1554.16px;top:101.00px;width:1.74px;height:1.45px;background:#d7ba7d"></div>
<div class="a" style="left:1555.89px;top:101.00px;width:0.87px;height:1.45px;background:#ce9178"></div>
<div class="a" style="left:1556.76px;top:101.00px;width:0.87px;height:1.45px;background:#d4d4d4"></div>
<div class="a" style="left:1499.47px;top:102.67px;width:2.60px;height:1.45px;background:#4ec9b0"></div>
<div class="a" style="left:1502.08px;top:102.67px;width:1.74px;height:1.45px;background:#d4d4d4"></div>
<div class="a" style="left:1503.81px;top:102.67px;width:3.47px;height:1.45px;background:#9cdcfe"></div>
<div class="a" style="left:1508.15px;top:102.67px;width:1.74px;height:1.45px;background:#d4d4d4"></div>
<div class="a" style="left:1510.76px;top:102.67px;width:8.68px;height:1.45px;background:#ce9178"></div>
<div class="a" style="left:1520.30px;top:102.67px;width:6.94px;height:1.45px;background:#ce9178"></div>
<div class="a" style="left:1528.12px;top:102.67px;width:4.34px;height:1.45px;background:#ce9178"></div>
<div class="a" style="left:1533.32px;top:102.67px;width:0.87px;height:1.45px;background:#ce9178"></div>
<div class="a" style="left:1535.06px;top:102.67px;width:1.74px;height:1.45px;background:#d4d4d4"></div>
<div class="a" style="left:1537.66px;top:102.67px;width:1.74px;height:1.45px;background:#9cdcfe"></div>
<div class="a" style="left:1539.40px;top:102.67px;width:0.87px;height:1.45px;background:#d4d4d4"></div>
<div class="a" style="left:1540.27px;top:102.67px;width:10.42px;height:1.45px;background:#dcdcaa"></div>
<div class="a" style="left:1550.68px;top:102.67px;width:1.74px;height:1.45px;background:#da70d6"></div>
<div class="a" style="left:1553.29px;top:102.67px;width:1.74px;height:1.45px;background:#d4d4d4"></div>
<div class="a" style="left:1555.89px;top:102.67px;width:0.87px;height:1.45px;background:#ce9178"></div>
<div class="a" style="left:1557.63px;top:102.67px;width:1.74px;height:1.45px;background:#ce9178"></div>
<div class="a" style="left:1559.36px;top:102.67px;width:1.74px;height:1.45px;background:#d7ba7d"></div>
<div class="a" style="left:1561.10px;top:102.67px;width:0.87px;height:1.45px;background:#ce9178"></div>
<div class="a" style="left:1561.97px;top:102.67px;width:0.87px;height:1.45px;background:#d4d4d4"></div>
<div class="a" style="left:1499.47px;top:104.34px;width:2.60px;height:1.45px;background:#4ec9b0"></div>
<div class="a" style="left:1502.08px;top:104.34px;width:1.74px;height:1.45px;background:#d4d4d4"></div>
<div class="a" style="left:1503.81px;top:104.34px;width:3.47px;height:1.45px;background:#9cdcfe"></div>
<div class="a" style="left:1508.15px;top:104.34px;width:1.74px;height:1.45px;background:#d4d4d4"></div>
<div class="a" style="left:1510.76px;top:104.34px;width:6.94px;height:1.45px;background:#ce9178"></div>
<div class="a" style="left:1518.57px;top:104.34px;width:1.74px;height:1.45px;background:#ce9178"></div>
<div class="a" style="left:1521.17px;top:104.34px;width:7.81px;height:1.45px;background:#ce9178"></div>
<div class="a" style="left:1529.85px;top:104.34px;width:4.34px;height:1.45px;background:#ce9178"></div>
<div class="a" style="left:1535.06px;top:104.34px;width:0.87px;height:1.45px;background:#ce9178"></div>
<div class="a" style="left:1536.80px;top:104.34px;width:1.74px;height:1.45px;background:#d4d4d4"></div>
<div class="a" style="left:1539.40px;top:104.34px;width:1.74px;height:1.45px;background:#9cdcfe"></div>
<div class="a" style="left:1541.14px;top:104.34px;width:0.87px;height:1.45px;background:#d4d4d4"></div>
<div class="a" style="left:1542.00px;top:104.34px;width:14.76px;height:1.45px;background:#dcdcaa"></div>
<div class="a" style="left:1556.76px;top:104.34px;width:1.74px;height:1.45px;background:#da70d6"></div>
<div class="a" style="left:1559.36px;top:104.34px;width:1.74px;height:1.45px;background:#d4d4d4"></div>
<div class="a" style="left:1561.97px;top:104.34px;width:0.87px;height:1.45px;background:#ce9178"></div>
<div class="a" style="left:1562.84px;top:104.34px;width:3.47px;height:1.45px;background:#d7ba7d"></div>
<div class="a" style="left:1566.31px;top:104.34px;width:0.87px;height:1.45px;background:#ce9178"></div>
<div class="a" style="left:1567.18px;top:104.34px;width:0.87px;height:1.45px;background:#d4d4d4"></div>
<div class="a" style="left:1499.47px;top:107.67px;width:2.60px;height:1.45px;background:#4ec9b0"></div>
<div class="a" style="left:1502.08px;top:107.67px;width:1.74px;height:1.45px;background:#d4d4d4"></div>
<div class="a" style="left:1503.81px;top:107.67px;width:3.47px;height:1.45px;background:#9cdcfe"></div>
<div class="a" style="left:1508.15px;top:107.67px;width:1.74px;height:1.45px;background:#d4d4d4"></div>
<div class="a" style="left:1510.76px;top:107.67px;width:6.08px;height:1.45px;background:#ce9178"></div>
<div class="a" style="left:1517.70px;top:107.67px;width:6.94px;height:1.45px;background:#ce9178"></div>
<div class="a" style="left:1525.51px;top:107.67px;width:4.34px;height:1.45px;background:#ce9178"></div>
<div class="a" style="left:1530.72px;top:107.67px;width:0.87px;height:1.45px;background:#ce9178"></div>
<div class="a" style="left:1532.46px;top:107.67px;width:1.74px;height:1.45px;background:#d4d4d4"></div>
<div class="a" style="left:1535.06px;top:107.67px;width:1.74px;height:1.45px;background:#9cdcfe"></div>
<div class="a" style="left:1536.80px;top:107.67px;width:0.87px;height:1.45px;background:#d4d4d4"></div>
<div class="a" style="left:1537.66px;top:107.67px;width:6.08px;height:1.45px;background:#dcdcaa"></div>
<div class="a" style="left:1543.74px;top:107.67px;width:1.74px;height:1.45px;background:#da70d6"></div>
<div class="a" style="left:1546.34px;top:107.67px;width:1.74px;height:1.45px;background:#d4d4d4"></div>
<div class="a" style="left:1548.95px;top:107.67px;width:0.87px;height:1.45px;background:#ce9178"></div>
<div class="a" style="left:1550.68px;top:107.67px;width:3.47px;height:1.45px;background:#ce9178"></div>
<div class="a" style="left:1554.16px;top:107.67px;width:1.74px;height:1.45px;background:#d7ba7d"></div>
<div class="a" style="left:1555.89px;top:107.67px;width:0.87px;height:1.45px;background:#ce9178"></div>
<div class="a" style="left:1556.76px;top:107.67px;width:0.87px;height:1.45px;background:#d4d4d4"></div>
<div class="a" style="left:1499.47px;top:109.34px;width:2.60px;height:1.45px;background:#4ec9b0"></div>
<div class="a" style="left:1502.08px;top:109.34px;width:1.74px;height:1.45px;background:#d4d4d4"></div>
<div class="a" style="left:1503.81px;top:109.34px;width:3.47px;height:1.45px;background:#9cdcfe"></div>
<div class="a" style="left:1508.15px;top:109.34px;width:1.74px;height:1.45px;background:#d4d4d4"></div>
<div class="a" style="left:1510.76px;top:109.34px;width:8.68px;height:1.45px;background:#ce9178"></div>
<div class="a" style="left:1520.30px;top:109.34px;width:6.94px;height:1.45px;background:#ce9178"></div>
<div class="a" style="left:1528.12px;top:109.34px;width:4.34px;height:1.45px;background:#ce9178"></div>
<div class="a" style="left:1533.32px;top:109.34px;width:0.87px;height:1.45px;background:#ce9178"></div>
<div class="a" style="left:1535.06px;top:109.34px;width:1.74px;height:1.45px;background:#d4d4d4"></div>
<div class="a" style="left:1537.66px;top:109.34px;width:1.74px;height:1.45px;background:#9cdcfe"></div>
<div class="a" style="left:1539.40px;top:109.34px;width:0.87px;height:1.45px;background:#d4d4d4"></div>
<div class="a" style="left:1540.27px;top:109.34px;width:10.42px;height:1.45px;background:#dcdcaa"></div>
<div class="a" style="left:1550.68px;top:109.34px;width:1.74px;height:1.45px;background:#da70d6"></div>
<div class="a" style="left:1553.29px;top:109.34px;width:1.74px;height:1.45px;background:#d4d4d4"></div>
<div class="a" style="left:1555.89px;top:109.34px;width:0.87px;height:1.45px;background:#ce9178"></div>
<div class="a" style="left:1557.63px;top:109.34px;width:1.74px;height:1.45px;background:#ce9178"></div>
<div class="a" style="left:1559.36px;top:109.34px;width:1.74px;height:1.45px;background:#d7ba7d"></div>
<div class="a" style="left:1561.10px;top:109.34px;width:0.87px;height:1.45px;background:#ce9178"></div>
<div class="a" style="left:1561.97px;top:109.34px;width:0.87px;height:1.45px;background:#d4d4d4"></div>
<div class="a" style="left:1499.47px;top:111.01px;width:2.60px;height:1.45px;background:#4ec9b0"></div>
<div class="a" style="left:1502.08px;top:111.01px;width:1.74px;height:1.45px;background:#d4d4d4"></div>
<div class="a" style="left:1503.81px;top:111.01px;width:3.47px;height:1.45px;background:#9cdcfe"></div>
<div class="a" style="left:1508.15px;top:111.01px;width:1.74px;height:1.45px;background:#d4d4d4"></div>
<div class="a" style="left:1510.76px;top:111.01px;width:6.94px;height:1.45px;background:#ce9178"></div>
<div class="a" style="left:1518.57px;top:111.01px;width:1.74px;height:1.45px;background:#ce9178"></div>
<div class="a" style="left:1521.17px;top:111.01px;width:7.81px;height:1.45px;background:#ce9178"></div>
<div class="a" style="left:1529.85px;top:111.01px;width:4.34px;height:1.45px;background:#ce9178"></div>
<div class="a" style="left:1535.06px;top:111.01px;width:0.87px;height:1.45px;background:#ce9178"></div>
<div class="a" style="left:1536.80px;top:111.01px;width:1.74px;height:1.45px;background:#d4d4d4"></div>
<div class="a" style="left:1539.40px;top:111.01px;width:1.74px;height:1.45px;background:#9cdcfe"></div>
<div class="a" style="left:1541.14px;top:111.01px;width:0.87px;height:1.45px;background:#d4d4d4"></div>
<div class="a" style="left:1542.00px;top:111.01px;width:14.76px;height:1.45px;background:#dcdcaa"></div>
<div class="a" style="left:1556.76px;top:111.01px;width:1.74px;height:1.45px;background:#da70d6"></div>
<div class="a" style="left:1559.36px;top:111.01px;width:1.74px;height:1.45px;background:#d4d4d4"></div>
<div class="a" style="left:1561.97px;top:111.01px;width:0.87px;height:1.45px;background:#ce9178"></div>
<div class="a" style="left:1562.84px;top:111.01px;width:3.47px;height:1.45px;background:#d7ba7d"></div>
<div class="a" style="left:1566.31px;top:111.01px;width:0.87px;height:1.45px;background:#ce9178"></div>
<div class="a" style="left:1567.18px;top:111.01px;width:0.87px;height:1.45px;background:#d4d4d4"></div>
<div class="a" style="left:1499.47px;top:114.34px;width:1.74px;height:1.45px;background:#9cdcfe"></div>
<div class="a" style="left:1501.21px;top:114.34px;width:0.87px;height:1.45px;background:#d4d4d4"></div>
<div class="a" style="left:1502.08px;top:114.34px;width:6.08px;height:1.45px;background:#dcdcaa"></div>
<div class="a" style="left:1508.15px;top:114.34px;width:0.87px;height:1.45px;background:#da70d6"></div>
<div class="a" style="left:1509.02px;top:114.34px;width:7.81px;height:1.45px;background:#b5cea8"></div>
<div class="a" style="left:1516.83px;top:114.34px;width:0.87px;height:1.45px;background:#da70d6"></div>
<div class="a" style="left:1517.70px;top:114.34px;width:0.87px;height:1.45px;background:#d4d4d4"></div>
<div class="a" style="left:1499.47px;top:116.01px;width:1.74px;height:1.45px;background:#9cdcfe"></div>
<div class="a" style="left:1501.21px;top:116.01px;width:0.87px;height:1.45px;background:#d4d4d4"></div>
<div class="a" style="left:1502.08px;top:116.01px;width:10.42px;height:1.45px;background:#dcdcaa"></div>
<div class="a" style="left:1512.49px;top:116.01px;width:0.87px;height:1.45px;background:#da70d6"></div>
<div class="a" style="left:1513.36px;top:116.01px;width:5.21px;height:1.45px;background:#b5cea8"></div>
<div class="a" style="left:1518.57px;top:116.01px;width:0.87px;height:1.45px;background:#da70d6"></div>
<div class="a" style="left:1519.44px;top:116.01px;width:0.87px;height:1.45px;background:#d4d4d4"></div>
<div class="a" style="left:1499.47px;top:117.67px;width:1.74px;height:1.45px;background:#9cdcfe"></div>
<div class="a" style="left:1501.21px;top:117.67px;width:0.87px;height:1.45px;background:#d4d4d4"></div>
<div class="a" style="left:1502.08px;top:117.67px;width:14.76px;height:1.45px;background:#dcdcaa"></div>
<div class="a" style="left:1516.83px;top:117.67px;width:0.87px;height:1.45px;background:#da70d6"></div>
<div class="a" style="left:1517.70px;top:117.67px;width:0.87px;height:1.45px;background:#b5cea8"></div>
<div class="a" style="left:1518.57px;top:117.67px;width:0.87px;height:1.45px;background:#da70d6"></div>
<div class="a" style="left:1519.44px;top:117.67px;width:0.87px;height:1.45px;background:#d4d4d4"></div>
<div class="a" style="left:1499.47px;top:121.01px;width:2.60px;height:1.45px;background:#4ec9b0"></div>
<div class="a" style="left:1502.08px;top:121.01px;width:1.74px;height:1.45px;background:#d4d4d4"></div>
<div class="a" style="left:1503.81px;top:121.01px;width:3.47px;height:1.45px;background:#9cdcfe"></div>
<div class="a" style="left:1508.15px;top:121.01px;width:1.74px;height:1.45px;background:#d4d4d4"></div>
<div class="a" style="left:1510.76px;top:121.01px;width:6.08px;height:1.45px;background:#ce9178"></div>
<div class="a" style="left:1517.70px;top:121.01px;width:6.94px;height:1.45px;background:#ce9178"></div>
<div class="a" style="left:1525.51px;top:121.01px;width:4.34px;height:1.45px;background:#ce9178"></div>
<div class="a" style="left:1530.72px;top:121.01px;width:0.87px;height:1.45px;background:#ce9178"></div>
<div class="a" style="left:1532.46px;top:121.01px;width:1.74px;height:1.45px;background:#d4d4d4"></div>
<div class="a" style="left:1535.06px;top:121.01px;width:1.74px;height:1.45px;background:#9cdcfe"></div>
<div class="a" style="left:1536.80px;top:121.01px;width:0.87px;height:1.45px;background:#d4d4d4"></div>
<div class="a" style="left:1537.66px;top:121.01px;width:6.08px;height:1.45px;background:#dcdcaa"></div>
<div class="a" style="left:1543.74px;top:121.01px;width:1.74px;height:1.45px;background:#da70d6"></div>
<div class="a" style="left:1546.34px;top:121.01px;width:1.74px;height:1.45px;background:#d4d4d4"></div>
<div class="a" style="left:1548.95px;top:121.01px;width:0.87px;height:1.45px;background:#ce9178"></div>
<div class="a" style="left:1550.68px;top:121.01px;width:3.47px;height:1.45px;background:#ce9178"></div>
<div class="a" style="left:1554.16px;top:121.01px;width:1.74px;height:1.45px;background:#d7ba7d"></div>
<div class="a" style="left:1555.89px;top:121.01px;width:0.87px;height:1.45px;background:#ce9178"></div>
<div class="a" style="left:1556.76px;top:121.01px;width:0.87px;height:1.45px;background:#d4d4d4"></div>
<div class="a" style="left:1499.47px;top:122.68px;width:2.60px;height:1.45px;background:#4ec9b0"></div>
<div class="a" style="left:1502.08px;top:122.68px;width:1.74px;height:1.45px;background:#d4d4d4"></div>
<div class="a" style="left:1503.81px;top:122.68px;width:3.47px;height:1.45px;background:#9cdcfe"></div>
<div class="a" style="left:1508.15px;top:122.68px;width:1.74px;height:1.45px;background:#d4d4d4"></div>
<div class="a" style="left:1510.76px;top:122.68px;width:8.68px;height:1.45px;background:#ce9178"></div>
<div class="a" style="left:1520.30px;top:122.68px;width:6.94px;height:1.45px;background:#ce9178"></div>
<div class="a" style="left:1528.12px;top:122.68px;width:4.34px;height:1.45px;background:#ce9178"></div>
<div class="a" style="left:1533.32px;top:122.68px;width:0.87px;height:1.45px;background:#ce9178"></div>
<div class="a" style="left:1535.06px;top:122.68px;width:1.74px;height:1.45px;background:#d4d4d4"></div>
<div class="a" style="left:1537.66px;top:122.68px;width:1.74px;height:1.45px;background:#9cdcfe"></div>
<div class="a" style="left:1539.40px;top:122.68px;width:0.87px;height:1.45px;background:#d4d4d4"></div>
<div class="a" style="left:1540.27px;top:122.68px;width:10.42px;height:1.45px;background:#dcdcaa"></div>
<div class="a" style="left:1550.68px;top:122.68px;width:1.74px;height:1.45px;background:#da70d6"></div>
<div class="a" style="left:1553.29px;top:122.68px;width:1.74px;height:1.45px;background:#d4d4d4"></div>
<div class="a" style="left:1555.89px;top:122.68px;width:0.87px;height:1.45px;background:#ce9178"></div>
<div class="a" style="left:1557.63px;top:122.68px;width:1.74px;height:1.45px;background:#ce9178"></div>
<div class="a" style="left:1559.36px;top:122.68px;width:1.74px;height:1.45px;background:#d7ba7d"></div>
<div class="a" style="left:1561.10px;top:122.68px;width:0.87px;height:1.45px;background:#ce9178"></div>
<div class="a" style="left:1561.97px;top:122.68px;width:0.87px;height:1.45px;background:#d4d4d4"></div>
<div class="a" style="left:1499.47px;top:124.34px;width:2.60px;height:1.45px;background:#4ec9b0"></div>
<div class="a" style="left:1502.08px;top:124.34px;width:1.74px;height:1.45px;background:#d4d4d4"></div>
<div class="a" style="left:1503.81px;top:124.34px;width:3.47px;height:1.45px;background:#9cdcfe"></div>
<div class="a" style="left:1508.15px;top:124.34px;width:1.74px;height:1.45px;background:#d4d4d4"></div>
<div class="a" style="left:1510.76px;top:124.34px;width:6.94px;height:1.45px;background:#ce9178"></div>
<div class="a" style="left:1518.57px;top:124.34px;width:1.74px;height:1.45px;background:#ce9178"></div>
<div class="a" style="left:1521.17px;top:124.34px;width:7.81px;height:1.45px;background:#ce9178"></div>
<div class="a" style="left:1529.85px;top:124.34px;width:4.34px;height:1.45px;background:#ce9178"></div>
<div class="a" style="left:1535.06px;top:124.34px;width:0.87px;height:1.45px;background:#ce9178"></div>
<div class="a" style="left:1536.80px;top:124.34px;width:1.74px;height:1.45px;background:#d4d4d4"></div>
<div class="a" style="left:1539.40px;top:124.34px;width:1.74px;height:1.45px;background:#9cdcfe"></div>
<div class="a" style="left:1541.14px;top:124.34px;width:0.87px;height:1.45px;background:#d4d4d4"></div>
<div class="a" style="left:1542.00px;top:124.34px;width:14.76px;height:1.45px;background:#dcdcaa"></div>
<div class="a" style="left:1556.76px;top:124.34px;width:1.74px;height:1.45px;background:#da70d6"></div>
<div class="a" style="left:1559.36px;top:124.34px;width:1.74px;height:1.45px;background:#d4d4d4"></div>
<div class="a" style="left:1561.97px;top:124.34px;width:0.87px;height:1.45px;background:#ce9178"></div>
<div class="a" style="left:1562.84px;top:124.34px;width:1.74px;height:1.45px;background:#d7ba7d"></div>
<div class="a" style="left:1564.57px;top:124.34px;width:0.87px;height:1.45px;background:#ce9178"></div>
<div class="a" style="left:1565.44px;top:124.34px;width:0.87px;height:1.45px;background:#d4d4d4"></div>
<div class="a" style="left:1499.47px;top:127.68px;width:5.21px;height:1.45px;background:#c586c0"></div>
<div class="a" style="left:1505.55px;top:127.68px;width:0.87px;height:1.45px;background:#b5cea8"></div>
<div class="a" style="left:1506.42px;top:127.68px;width:0.87px;height:1.45px;background:#d4d4d4"></div>
<div class="a" style="left:1496.00px;top:129.34px;width:0.87px;height:1.45px;background:#ffd700"></div></div>
<div class="a" style="left:1589px;top:61px;width:1px;height:587px;background:#333333"></div>
<div class="a" style="left:1589.4px;top:81px;width:10.6px;height:305.4px;background:#434343"></div>
<div class="a" style="left:1590px;top:134px;width:10.6px;height:8px;background:#6a6a30"></div>

<!-- stack frame highlight line 7 -->
<div class="a" style="left:334px;top:181px;width:1156px;height:16.67px;background:#4c4c19"></div>
<!-- indent guide -->
<div class="a" style="left:334px;top:147.7px;width:1px;height:416.7px;background:#707070"></div>

<div class="ln" style="top:81.00px">1</div>
<div class="cl" style="top:81.00px"><span style="color:#c586c0">#include</span><span class="w">·</span><span style="color:#ce9178">&quot;Gradina.h&quot;</span></div>
<div class="ln" style="top:97.67px">2</div>
<div class="cl" style="top:97.67px"></div>
<div class="ln" style="top:114.34px">3</div>
<div class="cl" style="top:114.34px"><span style="color:#569cd6">int</span><span class="w">·</span><span style="color:#dcdcaa">main</span><span style="color:#ffd700">()</span></div>
<div class="ln" style="top:131.01px">4</div>
<div class="cl" style="top:131.01px"><span style="color:#ffd700">{</span></div>
<div class="ln" style="top:147.68px">5</div>
<div class="cl" style="top:147.68px"><span class="w">·</span><span class="w">·</span><span class="w">·</span><span class="w">·</span><span style="color:#4ec9b0">Gradina</span><span class="w">·</span><span style="color:#9cdcfe">g1</span><span style="color:#d4d4d4">;</span></div>
<div class="ln" style="top:164.35px">6</div>
<div class="cl" style="top:164.35px"><span class="w">·</span><span class="w">·</span><span class="w">·</span><span class="w">·</span><span style="color:#4ec9b0">Gradina</span><span class="w">·</span><span style="color:#9cdcfe">g2</span><span style="color:#da70d6">(</span><span style="color:#b5cea8">250000.0f</span><span style="color:#d4d4d4">,</span><span class="w">·</span><span style="color:#b5cea8">4</span><span style="color:#da70d6">)</span><span style="color:#d4d4d4">;</span></div>
<div class="ln act" style="top:181.02px">7</div>
<div class="cl" style="top:181.02px"><span class="w">·</span><span class="w">·</span><span class="w">·</span><span class="w">·</span><span style="color:#4ec9b0">Gradina</span><span class="w">·</span><span style="color:#9cdcfe">g3</span><span style="color:#da70d6">(</span><span style="color:#b5cea8">500000.0f</span><span style="color:#d4d4d4">,</span><span class="w">·</span><span style="color:#b5cea8">6000.0</span><span style="color:#d4d4d4">,</span><span class="w">·</span><span style="color:#b5cea8">4</span><span style="color:#da70d6">)</span><span style="color:#d4d4d4">;</span></div>
<div class="ln" style="top:197.69px">8</div>
<div class="cl" style="top:197.69px"></div>
<div class="ln" style="top:214.36px">9</div>
<div class="cl" style="top:214.36px"><span class="w">·</span><span class="w">·</span><span class="w">·</span><span class="w">·</span><span style="color:#4ec9b0">std</span><span style="color:#d4d4d4">::</span><span style="color:#9cdcfe">cout</span><span class="w">·</span><span style="color:#d4d4d4">&lt;&lt;</span><span class="w">·</span><span style="color:#ce9178">&quot;Pretul</span><span class="w">·</span><span style="color:#ce9178">gradinii</span><span class="w">·</span><span style="color:#ce9178">este:</span><span class="w">·</span><span style="color:#ce9178">&quot;</span><span class="w">·</span><span style="color:#d4d4d4">&lt;&lt;</span><span class="w">·</span><span style="color:#9cdcfe">g1</span><span style="color:#d4d4d4">.</span><span style="color:#dcdcaa">getPret</span><span style="color:#da70d6">()</span><span class="w">·</span><span style="color:#d4d4d4">&lt;&lt;</span><span class="w">·</span><span style="color:#ce9178">&quot;</span><span class="w">·</span><span style="color:#ce9178">euro</span><span style="color:#d7ba7d">\n</span><span style="color:#ce9178">&quot;</span><span style="color:#d4d4d4">;</span></div>
<div class="ln" style="top:231.03px">10</div>
<div class="cl" style="top:231.03px"><span class="w">·</span><span class="w">·</span><span class="w">·</span><span class="w">·</span><span style="color:#4ec9b0">std</span><span style="color:#d4d4d4">::</span><span style="color:#9cdcfe">cout</span><span class="w">·</span><span style="color:#d4d4d4">&lt;&lt;</span><span class="w">·</span><span style="color:#ce9178">&quot;Suprafata</span><span class="w">·</span><span style="color:#ce9178">gradinii</span><span class="w">·</span><span style="color:#ce9178">este:</span><span class="w">·</span><span style="color:#ce9178">&quot;</span><span class="w">·</span><span style="color:#d4d4d4">&lt;&lt;</span><span class="w">·</span><span style="color:#9cdcfe">g1</span><span style="color:#d4d4d4">.</span><span style="color:#dcdcaa">getSuprafata</span><span style="color:#da70d6">()</span><span class="w">·</span><span style="color:#d4d4d4">&lt;&lt;</span><span class="w">·</span><span style="color:#ce9178">&quot;</span><span class="w">·</span><span style="color:#ce9178">ha</span><span style="color:#d7ba7d">\n</span><span style="color:#ce9178">&quot;</span><span style="color:#d4d4d4">;</span></div>
<div class="ln" style="top:247.70px">11</div>
<div class="cl" style="top:247.70px"><span class="w">·</span><span class="w">·</span><span class="w">·</span><span class="w">·</span><span style="color:#4ec9b0">std</span><span style="color:#d4d4d4">::</span><span style="color:#9cdcfe">cout</span><span class="w">·</span><span style="color:#d4d4d4">&lt;&lt;</span><span class="w">·</span><span style="color:#ce9178">&quot;Numarul</span><span class="w">·</span><span style="color:#ce9178">de</span><span class="w">·</span><span style="color:#ce9178">gradinari</span><span class="w">·</span><span style="color:#ce9178">este:</span><span class="w">·</span><span style="color:#ce9178">&quot;</span><span class="w">·</span><span style="color:#d4d4d4">&lt;&lt;</span><span class="w">·</span><span style="color:#9cdcfe">g1</span><span style="color:#d4d4d4">.</span><span style="color:#dcdcaa">getNumarGradinari</span><span style="color:#da70d6">()</span><span class="w">·</span><span style="color:#d4d4d4">&lt;&lt;</span><span class="w">·</span><span style="color:#ce9178">&quot;</span><span style="color:#d7ba7d">\n\n</span><span style="color:#ce9178">&quot;</span><span style="color:#d4d4d4">;</span></div>
<div class="ln" style="top:264.37px">12</div>
<div class="cl" style="top:264.37px"></div>
<div class="ln" style="top:281.04px">13</div>
<div class="cl" style="top:281.04px"><span class="w">·</span><span class="w">·</span><span class="w">·</span><span class="w">·</span><span style="color:#4ec9b0">std</span><span style="color:#d4d4d4">::</span><span style="color:#9cdcfe">cout</span><span class="w">·</span><span style="color:#d4d4d4">&lt;&lt;</span><span class="w">·</span><span style="color:#ce9178">&quot;Pretul</span><span class="w">·</span><span style="color:#ce9178">gradinii</span><span class="w">·</span><span style="color:#ce9178">este:</span><span class="w">·</span><span style="color:#ce9178">&quot;</span><span class="w">·</span><span style="color:#d4d4d4">&lt;&lt;</span><span class="w">·</span><span style="color:#9cdcfe">g2</span><span style="color:#d4d4d4">.</span><span style="color:#dcdcaa">getPret</span><span style="color:#da70d6">()</span><span class="w">·</span><span style="color:#d4d4d4">&lt;&lt;</span><span class="w">·</span><span style="color:#ce9178">&quot;</span><span class="w">·</span><span style="color:#ce9178">euro</span><span style="color:#d7ba7d">\n</span><span style="color:#ce9178">&quot;</span><span style="color:#d4d4d4">;</span></div>
<div class="ln" style="top:297.71px">14</div>
<div class="cl" style="top:297.71px"><span class="w">·</span><span class="w">·</span><span class="w">·</span><span class="w">·</span><span style="color:#4ec9b0">std</span><span style="color:#d4d4d4">::</span><span style="color:#9cdcfe">cout</span><span class="w">·</span><span style="color:#d4d4d4">&lt;&lt;</span><span class="w">·</span><span style="color:#ce9178">&quot;Suprafata</span><span class="w">·</span><span style="color:#ce9178">gradinii</span><span class="w">·</span><span style="color:#ce9178">este:</span><span class="w">·</span><span style="color:#ce9178">&quot;</span><span class="w">·</span><span style="color:#d4d4d4">&lt;&lt;</span><span class="w">·</span><span style="color:#9cdcfe">g2</span><span style="color:#d4d4d4">.</span><span style="color:#dcdcaa">getSuprafata</span><span style="color:#da70d6">()</span><span class="w">·</span><span style="color:#d4d4d4">&lt;&lt;</span><span class="w">·</span><span style="color:#ce9178">&quot;</span><span class="w">·</span><span style="color:#ce9178">ha</span><span style="color:#d7ba7d">\n</span><span style="color:#ce9178">&quot;</span><span style="color:#d4d4d4">;</span></div>
<div class="ln" style="top:314.38px">15</div>
<div class="cl" style="top:314.38px"><span class="w">·</span><span class="w">·</span><span class="w">·</span><span class="w">·</span><span style="color:#4ec9b0">std</span><span style="color:#d4d4d4">::</span><span style="color:#9cdcfe">cout</span><span class="w">·</span><span style="color:#d4d4d4">&lt;&lt;</span><span class="w">·</span><span style="color:#ce9178">&quot;Numarul</span><span class="w">·</span><span style="color:#ce9178">de</span><span class="w">·</span><span style="color:#ce9178">gradinari</span><span class="w">·</span><span style="color:#ce9178">este:</span><span class="w">·</span><span style="color:#ce9178">&quot;</span><span class="w">·</span><span style="color:#d4d4d4">&lt;&lt;</span><span class="w">·</span><span style="color:#9cdcfe">g2</span><span style="color:#d4d4d4">.</span><span style="color:#dcdcaa">getNumarGradinari</span><span style="color:#da70d6">()</span><span class="w">·</span><span style="color:#d4d4d4">&lt;&lt;</span><span class="w">·</span><span style="color:#ce9178">&quot;</span><span style="color:#d7ba7d">\n\n</span><span style="color:#ce9178">&quot;</span><span style="color:#d4d4d4">;</span></div>
<div class="ln" style="top:331.05px">16</div>
<div class="cl" style="top:331.05px"></div>
<div class="ln" style="top:347.72px">17</div>
<div class="cl" style="top:347.72px"><span class="w">·</span><span class="w">·</span><span class="w">·</span><span class="w">·</span><span style="color:#4ec9b0">std</span><span style="color:#d4d4d4">::</span><span style="color:#9cdcfe">cout</span><span class="w">·</span><span style="color:#d4d4d4">&lt;&lt;</span><span class="w">·</span><span style="color:#ce9178">&quot;Pretul</span><span class="w">·</span><span style="color:#ce9178">gradinii</span><span class="w">·</span><span style="color:#ce9178">este:</span><span class="w">·</span><span style="color:#ce9178">&quot;</span><span class="w">·</span><span style="color:#d4d4d4">&lt;&lt;</span><span class="w">·</span><span style="color:#9cdcfe">g3</span><span style="color:#d4d4d4">.</span><span style="color:#dcdcaa">getPret</span><span style="color:#da70d6">()</span><span class="w">·</span><span style="color:#d4d4d4">&lt;&lt;</span><span class="w">·</span><span style="color:#ce9178">&quot;</span><span class="w">·</span><span style="color:#ce9178">euro</span><span style="color:#d7ba7d">\n</span><span style="color:#ce9178">&quot;</span><span style="color:#d4d4d4">;</span></div>
<div class="ln" style="top:364.39px">18</div>
<div class="cl" style="top:364.39px"><span class="w">·</span><span class="w">·</span><span class="w">·</span><span class="w">·</span><span style="color:#4ec9b0">std</span><span style="color:#d4d4d4">::</span><span style="color:#9cdcfe">cout</span><span class="w">·</span><span style="color:#d4d4d4">&lt;&lt;</span><span class="w">·</span><span style="color:#ce9178">&quot;Suprafata</span><span class="w">·</span><span style="color:#ce9178">gradinii</span><span class="w">·</span><span style="color:#ce9178">este:</span><span class="w">·</span><span style="color:#ce9178">&quot;</span><span class="w">·</span><span style="color:#d4d4d4">&lt;&lt;</span><span class="w">·</span><span style="color:#9cdcfe">g3</span><span style="color:#d4d4d4">.</span><span style="color:#dcdcaa">getSuprafata</span><span style="color:#da70d6">()</span><span class="w">·</span><span style="color:#d4d4d4">&lt;&lt;</span><span class="w">·</span><span style="color:#ce9178">&quot;</span><span class="w">·</span><span style="color:#ce9178">ha</span><span style="color:#d7ba7d">\n</span><span style="color:#ce9178">&quot;</span><span style="color:#d4d4d4">;</span></div>
<div class="ln" style="top:381.06px">19</div>
<div class="cl" style="top:381.06px"><span class="w">·</span><span class="w">·</span><span class="w">·</span><span class="w">·</span><span style="color:#4ec9b0">std</span><span style="color:#d4d4d4">::</span><span style="color:#9cdcfe">cout</span><span class="w">·</span><span style="color:#d4d4d4">&lt;&lt;</span><span class="w">·</span><span style="color:#ce9178">&quot;Numarul</span><span class="w">·</span><span style="color:#ce9178">de</span><span class="w">·</span><span style="color:#ce9178">gradinari</span><span class="w">·</span><span style="color:#ce9178">este:</span><span class="w">·</span><span style="color:#ce9178">&quot;</span><span class="w">·</span><span style="color:#d4d4d4">&lt;&lt;</span><span class="w">·</span><span style="color:#9cdcfe">g3</span><span style="color:#d4d4d4">.</span><span style="color:#dcdcaa">getNumarGradinari</span><span style="color:#da70d6">()</span><span class="w">·</span><span style="color:#d4d4d4">&lt;&lt;</span><span class="w">·</span><span style="color:#ce9178">&quot;</span><span style="color:#d7ba7d">\n\n</span><span style="color:#ce9178">&quot;</span><span style="color:#d4d4d4">;</span></div>
<div class="ln" style="top:397.73px">20</div>
<div class="cl" style="top:397.73px"></div>
<div class="ln" style="top:414.40px">21</div>
<div class="cl" style="top:414.40px"><span class="w">·</span><span class="w">·</span><span class="w">·</span><span class="w">·</span><span style="color:#9cdcfe">g1</span><span style="color:#d4d4d4">.</span><span style="color:#dcdcaa">setPret</span><span style="color:#da70d6">(</span><span style="color:#b5cea8">100000.0f</span><span style="color:#da70d6">)</span><span style="color:#d4d4d4">;</span></div>
<div class="ln" style="top:431.07px">22</div>
<div class="cl" style="top:431.07px"><span class="w">·</span><span class="w">·</span><span class="w">·</span><span class="w">·</span><span style="color:#9cdcfe">g1</span><span style="color:#d4d4d4">.</span><span style="color:#dcdcaa">setSuprafata</span><span style="color:#da70d6">(</span><span style="color:#b5cea8">2000.0</span><span style="color:#da70d6">)</span><span style="color:#d4d4d4">;</span></div>
<div class="ln" style="top:447.74px">23</div>
<div class="cl" style="top:447.74px"><span class="w">·</span><span class="w">·</span><span class="w">·</span><span class="w">·</span><span style="color:#9cdcfe">g1</span><span style="color:#d4d4d4">.</span><span style="color:#dcdcaa">setNumarGradinari</span><span style="color:#da70d6">(</span><span style="color:#b5cea8">1</span><span style="color:#da70d6">)</span><span style="color:#d4d4d4">;</span></div>
<div class="ln" style="top:464.41px">24</div>
<div class="cl" style="top:464.41px"></div>
<div class="ln" style="top:481.08px">25</div>
<div class="cl" style="top:481.08px"><span class="w">·</span><span class="w">·</span><span class="w">·</span><span class="w">·</span><span style="color:#4ec9b0">std</span><span style="color:#d4d4d4">::</span><span style="color:#9cdcfe">cout</span><span class="w">·</span><span style="color:#d4d4d4">&lt;&lt;</span><span class="w">·</span><span style="color:#ce9178">&quot;Pretul</span><span class="w">·</span><span style="color:#ce9178">gradinii</span><span class="w">·</span><span style="color:#ce9178">este:</span><span class="w">·</span><span style="color:#ce9178">&quot;</span><span class="w">·</span><span style="color:#d4d4d4">&lt;&lt;</span><span class="w">·</span><span style="color:#9cdcfe">g1</span><span style="color:#d4d4d4">.</span><span style="color:#dcdcaa">getPret</span><span style="color:#da70d6">()</span><span class="w">·</span><span style="color:#d4d4d4">&lt;&lt;</span><span class="w">·</span><span style="color:#ce9178">&quot;</span><span class="w">·</span><span style="color:#ce9178">euro</span><span style="color:#d7ba7d">\n</span><span style="color:#ce9178">&quot;</span><span style="color:#d4d4d4">;</span></div>
<div class="ln" style="top:497.75px">26</div>
<div class="cl" style="top:497.75px"><span class="w">·</span><span class="w">·</span><span class="w">·</span><span class="w">·</span><span style="color:#4ec9b0">std</span><span style="color:#d4d4d4">::</span><span style="color:#9cdcfe">cout</span><span class="w">·</span><span style="color:#d4d4d4">&lt;&lt;</span><span class="w">·</span><span style="color:#ce9178">&quot;Suprafata</span><span class="w">·</span><span style="color:#ce9178">gradinii</span><span class="w">·</span><span style="color:#ce9178">este:</span><span class="w">·</span><span style="color:#ce9178">&quot;</span><span class="w">·</span><span style="color:#d4d4d4">&lt;&lt;</span><span class="w">·</span><span style="color:#9cdcfe">g1</span><span style="color:#d4d4d4">.</span><span style="color:#dcdcaa">getSuprafata</span><span style="color:#da70d6">()</span><span class="w">·</span><span style="color:#d4d4d4">&lt;&lt;</span><span class="w">·</span><span style="color:#ce9178">&quot;</span><span class="w">·</span><span style="color:#ce9178">ha</span><span style="color:#d7ba7d">\n</span><span style="color:#ce9178">&quot;</span><span style="color:#d4d4d4">;</span></div>
<div class="ln" style="top:514.42px">27</div>
<div class="cl" style="top:514.42px"><span class="w">·</span><span class="w">·</span><span class="w">·</span><span class="w">·</span><span style="color:#4ec9b0">std</span><span style="color:#d4d4d4">::</span><span style="color:#9cdcfe">cout</span><span class="w">·</span><span style="color:#d4d4d4">&lt;&lt;</span><span class="w">·</span><span style="color:#ce9178">&quot;Numarul</span><span class="w">·</span><span style="color:#ce9178">de</span><span class="w">·</span><span style="color:#ce9178">gradinari</span><span class="w">·</span><span style="color:#ce9178">este:</span><span class="w">·</span><span style="color:#ce9178">&quot;</span><span class="w">·</span><span style="color:#d4d4d4">&lt;&lt;</span><span class="w">·</span><span style="color:#9cdcfe">g1</span><span style="color:#d4d4d4">.</span><span style="color:#dcdcaa">getNumarGradinari</span><span style="color:#da70d6">()</span><span class="w">·</span><span style="color:#d4d4d4">&lt;&lt;</span><span class="w">·</span><span style="color:#ce9178">&#x27;</span><span style="color:#d7ba7d">\n</span><span style="color:#ce9178">&#x27;</span><span style="color:#d4d4d4">;</span></div>
<div class="ln" style="top:531.09px">28</div>
<div class="cl" style="top:531.09px"></div>
<div class="ln" style="top:547.76px">29</div>
<div class="cl" style="top:547.76px"><span class="w">·</span><span class="w">·</span><span class="w">·</span><span class="w">·</span><span style="color:#c586c0">return</span><span class="w">·</span><span style="color:#b5cea8">0</span><span style="color:#d4d4d4">;</span></div>
<div class="ln" style="top:564.43px">30</div>
<div class="cl" style="top:564.43px"><span style="color:#ffd700">}</span></div>

<div id="panel" class="a"></div>
<div class="a" style="left:292.40px;top:658.33px;font-size:10.60px;line-height:1;white-space:pre;color:#a0a0a0;font-family:'Liberation Sans',sans-serif;transform:scaleX(0.7914);transform-origin:0 0;">PROBLEMS</div>
<div class="a" style="left:342px;top:655.7px;width:18.7px;height:15px;background:#0078d4;border-radius:7.5px"></div>
<div class="a" style="left:345.50px;top:659.96px;font-size:9.50px;line-height:1;white-space:pre;color:#ffffff;font-family:'Liberation Sans',sans-serif;font-weight:bold;">11</div>
<div class="a" style="left:380.20px;top:658.33px;font-size:10.60px;line-height:1;white-space:pre;color:#a0a0a0;font-family:'Liberation Sans',sans-serif;transform:scaleX(0.8286);transform-origin:0 0;">OUTPUT</div>
<div class="a" style="left:437.70px;top:658.33px;font-size:10.60px;line-height:1;white-space:pre;color:#e7e7e7;font-family:'Liberation Sans',sans-serif;transform:scaleX(0.8034);transform-origin:0 0;">DEBUG CONSOLE</div>
<div class="a" style="left:435.4px;top:672.3px;width:77.6px;height:1.2px;background:#0078d4"></div>
<div class="a" style="left:534.00px;top:658.33px;font-size:10.60px;line-height:1;white-space:pre;color:#a0a0a0;font-family:'Liberation Sans',sans-serif;transform:scaleX(0.8286);transform-origin:0 0;">TERMINAL</div>
<div class="a" style="left:599.80px;top:658.33px;font-size:10.60px;line-height:1;white-space:pre;color:#a0a0a0;font-family:'Liberation Sans',sans-serif;transform:scaleX(0.7437);transform-origin:0 0;">PORTS</div>
<div class="a" style="left:1314px;top:654.2px;width:174.6px;height:20.4px;background:#313131;border-radius:2px"></div>
<div class="a" style="left:1320.30px;top:660.23px;font-size:10.60px;line-height:1;white-space:pre;color:#9d9d9d;font-family:'Liberation Sans',sans-serif;transform:scaleX(0.9512);transform-origin:0 0;">Filter (e.g. text, !exclude, \esca...</div>
<svg style="left:1495px;top:657px" width="15" height="14" viewBox="0 0 15 14"><circle cx="5.6" cy="5.6" r="4.6" fill="none" stroke="#cccccc" stroke-width="1.3"/><path d="M8.9 8.9 13.6 13.3" stroke="#cccccc" stroke-width="1.5"/></svg>
<svg style="left:1518.5px;top:658px" width="14" height="10" viewBox="0 0 14 10"><g stroke="#cccccc" stroke-width="1.1"><path d="M0 0.8h13M0 3.3h13M0 5.8h8M0 8.3h8"/><path d="M9.6 5.6l3 3M12.6 5.6l-3 3"/></g></svg>
<div class="a" style="left:1542px;top:657px;width:1px;height:13px;background:#4a4a4a"></div>
<svg style="left:1553.3px;top:657px" width="12.5" height="11" viewBox="0 0 12.5 11"><path d="M0.6 3.5V0.6H3.5M9 0.6h2.9V3.5M11.9 7.5v2.9H9M3.5 10.4H0.6V7.5" fill="none" stroke="#cccccc" stroke-width="1.2"/></svg>
<svg style="left:1578px;top:659px" width="9" height="8" viewBox="0 0 9 8"><path d="M0.5 0.2l8 7.6M8.5 0.2l-8 7.6" stroke="#cccccc" stroke-width="1.2"/></svg>
<div class="a" style="left:276px;top:679px;width:1324px;height:185px;overflow:hidden"><div class="a mo" style="left:25.50px;top:-3.57px;font-size:11.25px;line-height:1;white-space:pre;color:#3794ff;font-family:'Liberation Mono',monospace;">=cmd-param-changed,param=&quot;pagination&quot;,value=&quot;off&quot;</div>
<div class="a mo" style="left:25.50px;top:13.98px;font-size:11.25px;line-height:1;white-space:pre;color:#3794ff;font-family:'Liberation Mono',monospace;">[New Thread 28724.0x580c]</div>
<div class="a mo" style="left:25.50px;top:31.53px;font-size:11.25px;line-height:1;white-space:pre;color:#3794ff;font-family:'Liberation Mono',monospace;">[New Thread 28724.0x773c]</div>
<div class="a mo" style="left:25.50px;top:49.08px;font-size:11.25px;line-height:1;white-space:pre;color:#3794ff;font-family:'Liberation Mono',monospace;">[New Thread 28724.0x754c]</div>
<div class="a mo" style="left:25.50px;top:66.63px;font-size:11.25px;line-height:1;white-space:pre;color:#3794ff;font-family:'Liberation Mono',monospace;">[New Thread 28724.0x70e0]</div>
<div class="a mo" style="left:25.50px;top:84.18px;font-size:11.25px;line-height:1;white-space:pre;color:#cca700;font-family:'Liberation Mono',monospace;">Loaded &#x27;C:\WINDOWS\SysWOW64\kernel32.dll&#x27;. Symbols loaded.</div>
<div class="a mo" style="left:25.50px;top:101.73px;font-size:11.25px;line-height:1;white-space:pre;color:#cca700;font-family:'Liberation Mono',monospace;">Loaded &#x27;C:\WINDOWS\SysWOW64\KernelBase.dll&#x27;. Symbols loaded.</div>
<div class="a mo" style="left:25.50px;top:119.28px;font-size:11.25px;line-height:1;white-space:pre;color:#cca700;font-family:'Liberation Mono',monospace;">Loaded &#x27;C:\WINDOWS\SysWOW64\msvcrt.dll&#x27;. Symbols loaded.</div>
<div class="a mo" style="left:25.50px;top:136.83px;font-size:11.25px;line-height:1;white-space:pre;color:#cca700;font-family:'Liberation Mono',monospace;">Loaded &#x27;C:\MinGW\bin\libgcc_s_dw2-1.dll&#x27;. Symbols loaded.</div>
<div class="a mo" style="left:25.50px;top:154.38px;font-size:11.25px;line-height:1;white-space:pre;color:#cca700;font-family:'Liberation Mono',monospace;">Loaded &#x27;C:\MinGW\bin\libstdc++-6.dll&#x27;. Symbols loaded.</div>
<div class="a mo" style="left:25.50px;top:171.93px;font-size:11.25px;line-height:1;white-space:pre;color:#cca700;font-family:'Liberation Mono',monospace;">Execute debugger commands using &quot;-exec &lt;command&gt;&quot;, for example &quot;-exec info registers&quot; will list registers in use (when GDB is the debugger)</div></div>
<div class="a" style="left:275px;top:864.5px;width:1325px;height:1px;background:#2b2b2b"></div>
<div class="a" style="left:275px;top:678.8px;width:1325px;height:1.2px;background:#111111;box-shadow:0 1px 2px rgba(0,0,0,0.35)"></div>
<svg style="left:285.6px;top:869.4px" width="7" height="9" viewBox="0 0 7 9"><path d="M0.8 0.6 5.8 4.5 0.8 8.4" fill="none" stroke="#cccccc" stroke-width="1.3"/></svg>
<div id="status" class="a"></div>
<svg style="left:7.8px;top:885.5px" width="10" height="11" viewBox="0 0 10 11"><g fill="none" stroke="#ffffff" stroke-width="1.2"><path d="M0.5 10 4.5 6 0.5 2"/><path d="M9.5 0.5 5.5 4.5 9.5 8.5"/></g></svg>
<svg style="left:35.2px;top:885.5px" width="11" height="11" viewBox="0 0 11 11"><g fill="none" stroke="#ffffff" stroke-width="1.1"><circle cx="5.5" cy="5.5" r="4.8"/><path d="M3.4 3.4l4.2 4.2M7.6 3.4l-4.2 4.2"/></g></svg>
<div class="a" style="left:50.00px;top:886.83px;font-size:10.00px;line-height:1;white-space:pre;color:#ffffff;font-family:'Liberation Sans',sans-serif;transform:scaleX(0.9910);transform-origin:0 0;">0</div>
<svg style="left:59.4px;top:885px" width="11" height="11" viewBox="0 0 11 11"><g fill="none" stroke="#ffffff" stroke-width="1.1" stroke-linejoin="round"><path d="M5.5 0.8 10.3 10H0.7z"/><path d="M5.5 4v3M5.5 8v0.9"/></g></svg>
<div class="a" style="left:74.70px;top:886.83px;font-size:10.00px;line-height:1;white-space:pre;color:#ffffff;font-family:'Liberation Sans',sans-serif;transform:scaleX(0.9327);transform-origin:0 0;">11</div>
<svg style="left:99px;top:885px" width="13" height="12" viewBox="0 0 13 12"><g fill="none" stroke="#ffffff" stroke-width="1.1"><path d="M5.5 10H0.6V0.6h10v3.5"/><path d="M0.6 3h10"/></g><circle cx="9.3" cy="8.6" r="3.2" fill="#ffffff"/><path d="M7.8 8.6l1 1 1.8-2" fill="none" stroke="#0078d4" stroke-width="1"/></svg>
<div class="a" style="left:114.00px;top:886.83px;font-size:10.00px;line-height:1;white-space:pre;color:#ffffff;font-family:'Liberation Sans',sans-serif;transform:scaleX(1.0559);transform-origin:0 0;">test</div>
<svg style="left:145.3px;top:884.8px" width="12" height="12" viewBox="0 0 12 12"><g fill="none" stroke="#ffffff" stroke-width="1.2"><path d="M1 11 7 5"/><path d="M6.5 3.5a3 3 0 0 1 4-2.8l-2 2 1 1 2-2a3 3 0 0 1-2.8 4"/><path d="M1.5 1 11 10.5"/><path d="M0.7 2.3 2.3 0.7"/></g></svg>
<div class="a" style="left:160.20px;top:886.83px;font-size:10.00px;line-height:1;white-space:pre;color:#ffffff;font-family:'Liberation Sans',sans-serif;transform:scaleX(1.0458);transform-origin:0 0;">Debug</div>
<svg style="left:205.00px;top:883.80px" width="13.2" height="13.2" viewBox="-6.60 -6.60 13.2 13.2"><g fill="none" stroke="#ffffff" stroke-width="1.00" stroke-linejoin="round"><path d="M-0.91 -3.56 L-0.80 -5.04 L0.80 -5.04 L0.91 -3.56 L1.87 -3.16 L3.00 -4.13 L4.13 -3.00 L3.16 -1.87 L3.56 -0.91 L5.04 -0.80 L5.04 0.80 L3.56 0.91 L3.16 1.87 L4.13 3.00 L3.00 4.13 L1.87 3.16 L0.91 3.56 L0.80 5.04 L-0.80 5.04 L-0.91 3.56 L-1.87 3.16 L-3.00 4.13 L-4.13 3.00 L-3.16 1.87 L-3.56 0.91 L-5.04 0.80 L-5.04 -0.80 L-3.56 -0.91 L-3.16 -1.87 L-4.13 -3.00 L-3.00 -4.13 L-1.87 -3.16Z"/><circle r="1.50"/></g></svg>
<svg style="left:233.6px;top:885.5px" width="9" height="11" viewBox="0 0 9 11"><path d="M0.8 0.8 8.2 5.5 0.8 10.2z" fill="none" stroke="#ffffff" stroke-width="1.1" stroke-linejoin="round"/></svg>
<svg style="left:258.6px;top:885px" width="11" height="12" viewBox="0 0 11 12"><g fill="none" stroke="#ffffff" stroke-width="1.1"><path d="M3 5a2.5 2.8 0 0 1 5 0v2.8a2.5 2.8 0 0 1-5 0z"/><path d="M0.5 3.5l2.5 1.5M10.5 3.5 8 5M0.3 7h2.7M8 7h2.7M0.5 10.5 3 9M10.5 10.5 8 9M3.8 1l1 1.5M7.2 1l-1 1.5"/></g></svg>
<svg style="left:285.6px;top:884.8px" width="10" height="12" viewBox="0 0 10 12"><g fill="none" stroke="#ffffff" stroke-width="1.1"><path d="M0 2.5h10M3 2.5V0.6h4v1.9M1.5 2.5v8.9h7V2.5M4 4.5v5M6 4.5v5"/></g></svg>
<svg style="left:310px;top:884.8px" width="13" height="12" viewBox="0 0 13 12"><g fill="none" stroke="#ffffff" stroke-width="1.1" stroke-linejoin="round"><path d="M5.5 0.8 12 5 6.5 8.6"/><path d="M5.5 0.8V4"/><circle cx="3.2" cy="8.6" r="2.5"/></g></svg>
<div class="a" style="left:325.80px;top:886.83px;font-size:10.00px;line-height:1;white-space:pre;color:#ffffff;font-family:'Liberation Sans',sans-serif;transform:scaleX(1.0278);transform-origin:0 0;">C/C++ Runner: Debug Session (test)</div>
<div class="a" style="left:1205.40px;top:886.83px;font-size:10.00px;line-height:1;white-space:pre;color:#ffffff;font-family:'Liberation Sans',sans-serif;transform:scaleX(0.9804);transform-origin:0 0;">Ln 7, Col 1</div>
<div class="a" style="left:1267.40px;top:886.83px;font-size:10.00px;line-height:1;white-space:pre;color:#ffffff;font-family:'Liberation Sans',sans-serif;transform:scaleX(0.9584);transform-origin:0 0;">Spaces: 4</div>
<div class="a" style="left:1324.60px;top:886.83px;font-size:10.00px;line-height:1;white-space:pre;color:#ffffff;font-family:'Liberation Sans',sans-serif;transform:scaleX(0.9665);transform-origin:0 0;">UTF-8</div>
<div class="a" style="left:1366.40px;top:886.83px;font-size:10.00px;line-height:1;white-space:pre;color:#ffffff;font-family:'Liberation Sans',sans-serif;transform:scaleX(0.8544);transform-origin:0 0;">CRLF</div>
<div class="a" style="left:1404.00px;top:885.91px;font-size:10.50px;line-height:1;white-space:pre;color:#ffffff;font-family:'Liberation Sans',sans-serif;letter-spacing:-1px;">{ }</div>
<div class="a" style="left:1420.80px;top:886.83px;font-size:10.00px;line-height:1;white-space:pre;color:#ffffff;font-family:'Liberation Sans',sans-serif;transform:scaleX(1.0582);transform-origin:0 0;">C++</div>
<svg style="left:1455.4px;top:884.8px" width="13" height="12" viewBox="0 0 13 12"><g fill="none" stroke="#ffffff" stroke-width="1.2"><path d="M2 5.5v4.5a1.5 1.5 0 0 0 1.5 1.3h6a1.5 1.5 0 0 0 1.5-1.3V5.5"/><rect x="0.8" y="0.8" width="5.2" height="4.5" rx="2"/><rect x="7" y="0.8" width="5.2" height="4.5" rx="2"/><path d="M5 7.5v2M8 7.5v2"/></g></svg>
<div class="a" style="left:1482.35px;top:886.83px;font-size:10.00px;line-height:1;white-space:pre;color:#ffffff;font-family:'Liberation Sans',sans-serif;transform:scaleX(1.0515);transform-origin:0 0;">windows-gcc-x86</div>
<svg style="left:1578.5px;top:885px" width="11" height="12" viewBox="0 0 11 12"><g fill="none" stroke="#ffffff" stroke-width="1.1" stroke-linejoin="round"><path d="M1 9h9L8.8 7.5V4.5a3.3 3.3 0 0 0-6.6 0v3z"/><path d="M4 10.5a1.5 1.5 0 0 0 3 0"/></g></svg>
<svg style="left:8.08px;top:851.27px" width="20.4" height="20.4" viewBox="-10.22 -10.22 20.4 20.4"><g fill="none" stroke="#9a9a9a" stroke-width="1.25" stroke-linejoin="round"><path d="M-1.54 -6.00 L-1.35 -8.49 L1.35 -8.49 L1.54 -6.00 L3.15 -5.33 L5.05 -6.96 L6.96 -5.05 L5.33 -3.15 L6.00 -1.54 L8.49 -1.35 L8.49 1.35 L6.00 1.54 L5.33 3.15 L6.96 5.05 L5.05 6.96 L3.15 5.33 L1.54 6.00 L1.35 8.49 L-1.35 8.49 L-1.54 6.00 L-3.15 5.33 L-5.05 6.96 L-6.96 5.05 L-5.33 3.15 L-6.00 1.54 L-8.49 1.35 L-8.49 -1.35 L-6.00 -1.54 L-5.33 -3.15 L-6.96 -5.05 L-5.05 -6.96 L-3.15 -5.33Z"/><circle r="2.50"/></g></svg>
</body></html>
